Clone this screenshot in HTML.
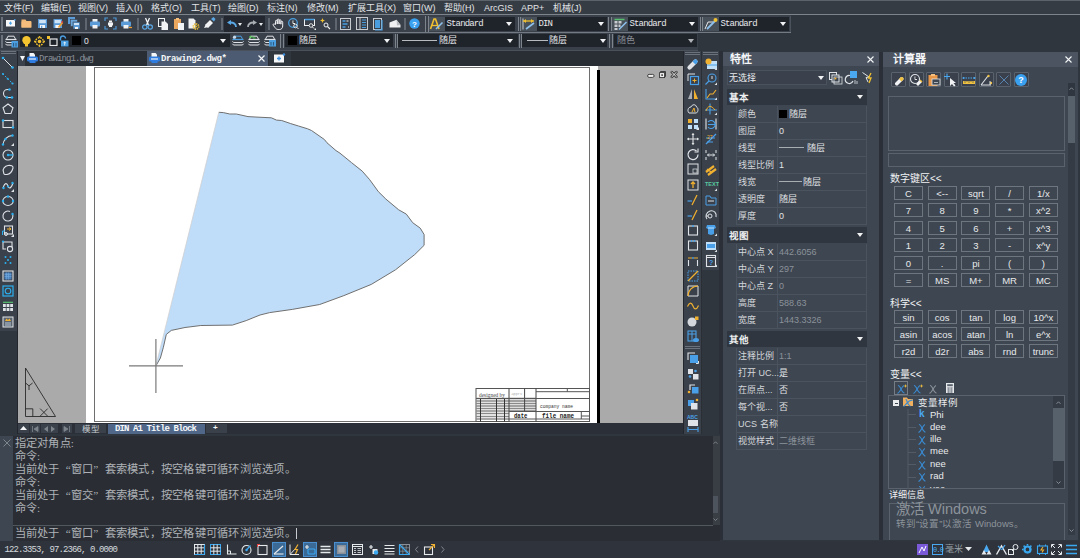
<!DOCTYPE html><html lang="zh-CN"><head><meta charset="utf-8"><style>
*{margin:0;padding:0;box-sizing:border-box}
html,body{width:1080px;height:558px;overflow:hidden;background:#30363e;font-family:"Liberation Sans",sans-serif}
.a{position:absolute}
.t{position:absolute;white-space:nowrap;line-height:1}
.s{font-family:"Liberation Sans",sans-serif}
.m{font-family:"Liberation Mono",monospace}
.r{font-family:"Liberation Serif",serif}
svg{position:absolute;overflow:visible}
</style></head><body>

<div class="a" style="left:0px;top:0px;width:1080px;height:1px;background:#5d636b;"></div>
<div class="a" style="left:0px;top:1px;width:1080px;height:13px;background:#363c44;"></div>
<div class="a" style="left:0px;top:14px;width:1080px;height:1px;background:#7d848c;"></div>
<div class="t s" style="left:4px;top:3.5px;font-size:9px;color:#e2e5e8;">文件(F)</div>
<div class="t s" style="left:41px;top:3.5px;font-size:9px;color:#e2e5e8;">编辑(E)</div>
<div class="t s" style="left:78px;top:3.5px;font-size:9px;color:#e2e5e8;">视图(V)</div>
<div class="t s" style="left:116px;top:3.5px;font-size:9px;color:#e2e5e8;">插入(I)</div>
<div class="t s" style="left:151px;top:3.5px;font-size:9px;color:#e2e5e8;">格式(O)</div>
<div class="t s" style="left:191px;top:3.5px;font-size:9px;color:#e2e5e8;">工具(T)</div>
<div class="t s" style="left:228px;top:3.5px;font-size:9px;color:#e2e5e8;">绘图(D)</div>
<div class="t s" style="left:267px;top:3.5px;font-size:9px;color:#e2e5e8;">标注(N)</div>
<div class="t s" style="left:307px;top:3.5px;font-size:9px;color:#e2e5e8;">修改(M)</div>
<div class="t s" style="left:348px;top:3.5px;font-size:9px;color:#e2e5e8;">扩展工具(X)</div>
<div class="t s" style="left:403px;top:3.5px;font-size:9px;color:#e2e5e8;">窗口(W)</div>
<div class="t s" style="left:444px;top:3.5px;font-size:9px;color:#e2e5e8;">帮助(H)</div>
<div class="t s" style="left:484px;top:3.5px;font-size:9px;color:#e2e5e8;">ArcGIS</div>
<div class="t s" style="left:521px;top:3.5px;font-size:9px;color:#e2e5e8;">APP+</div>
<div class="t s" style="left:553px;top:3.5px;font-size:9px;color:#e2e5e8;">机械(J)</div>
<div class="a" style="left:0px;top:15px;width:1080px;height:36px;background:#30363e;"></div>
<div class="a" style="left:0px;top:15px;width:791px;height:17px;background:#3a4049;"></div>
<div class="a" style="left:0px;top:32px;width:791px;height:1px;background:#737a83;"></div>
<div class="a" style="left:790px;top:16px;width:1px;height:16px;background:#4a525b;"></div>
<div class="a" style="left:0px;top:33px;width:698px;height:17px;background:#3a4049;"></div>
<div class="a" style="left:429px;top:17px;width:16px;height:14px;background:#485059;"></div>
<div class="a" style="left:521px;top:17px;width:16px;height:14px;background:#485059;"></div>
<div class="a" style="left:612px;top:17px;width:16px;height:14px;background:#485059;"></div>
<div class="a" style="left:703px;top:17px;width:16px;height:14px;background:#485059;"></div>
<div class="a" style="left:0px;top:50px;width:698px;height:1px;background:#4a515a;"></div>
<div class="a" style="left:1px;top:17px;width:2px;height:14px;background:#6b727b;"></div>
<div class="a" style="left:1px;top:35px;width:2px;height:13px;background:#6b727b;"></div>
<div class="a" style="left:425px;top:16px;width:1.2px;height:16px;background:#7d848c;"></div>
<div class="a" style="left:427.6px;top:16px;width:1.2px;height:16px;background:#7d848c;"></div>
<div class="a" style="left:517.5px;top:17px;width:1.2px;height:14px;background:#7d848c;"></div>
<div class="a" style="left:520.1px;top:17px;width:1.2px;height:14px;background:#7d848c;"></div>
<div class="a" style="left:608px;top:17px;width:1.2px;height:14px;background:#7d848c;"></div>
<div class="a" style="left:610.6px;top:17px;width:1.2px;height:14px;background:#7d848c;"></div>
<div class="a" style="left:699.5px;top:17px;width:1.2px;height:14px;background:#7d848c;"></div>
<div class="a" style="left:702.1px;top:17px;width:1.2px;height:14px;background:#7d848c;"></div>
<div class="a" style="left:280px;top:34px;width:1.2px;height:14px;background:#7d848c;"></div>
<div class="a" style="left:282.6px;top:34px;width:1.2px;height:14px;background:#7d848c;"></div>
<div class="a" style="left:394.5px;top:34px;width:1.2px;height:14px;background:#7d848c;"></div>
<div class="a" style="left:397.1px;top:34px;width:1.2px;height:14px;background:#7d848c;"></div>
<div class="a" style="left:518.5px;top:34px;width:1.2px;height:14px;background:#7d848c;"></div>
<div class="a" style="left:521.1px;top:34px;width:1.2px;height:14px;background:#7d848c;"></div>
<div class="a" style="left:609px;top:34px;width:1.2px;height:14px;background:#7d848c;"></div>
<div class="a" style="left:611.6px;top:34px;width:1.2px;height:14px;background:#7d848c;"></div>
<div class="a" style="left:85px;top:18px;width:2px;height:12px;background:#5f666f;"></div>
<div class="a" style="left:137px;top:18px;width:2px;height:12px;background:#5f666f;"></div>
<div class="a" style="left:221px;top:18px;width:2px;height:12px;background:#5f666f;"></div>
<div class="a" style="left:268px;top:18px;width:2px;height:12px;background:#5f666f;"></div>
<div class="a" style="left:335px;top:18px;width:2px;height:12px;background:#5f666f;"></div>
<div class="a" style="left:404px;top:18px;width:2px;height:12px;background:#5f666f;"></div>
<svg style="left:6px;top:19px;" width="10" height="8" viewBox="0 0 10 8"><rect x="0" y="1" width="9" height="6.5" fill="#f4f6f8"/><path d="M4.5 2.3L6 4.2 4.5 6 3 4.2Z" fill="#4aa3e8"/><circle cx="8.8" cy="0.8" r="0.9" fill="#4aa3e8"/></svg><svg style="left:21px;top:19px;" width="11" height="9" viewBox="0 0 11 9"><path d="M0.5 0.5h4l1 1.5h4.5v6.5h-9.5z" fill="#f0b878"/><rect x="0.5" y="2.5" width="10" height="6" fill="#f6bd7d"/></svg><svg style="left:38px;top:19px;" width="9" height="9" viewBox="0 0 9 9"><rect x="0" y="0" width="9" height="9" fill="#5b9bd8"/><rect x="1.2" y="1" width="6.6" height="3.2" fill="#cfe3f6"/><rect x="2" y="6" width="5" height="3" fill="#f4f6f8"/><rect x="3" y="6.8" width="1.3" height="2.2" fill="#5b9bd8"/></svg><svg style="left:53px;top:19px;" width="10" height="9" viewBox="0 0 10 9"><rect x="0.5" y="0" width="8.5" height="9" fill="#5b9bd8"/><rect x="1.6" y="1" width="6.2" height="3.2" fill="#cfe3f6"/><rect x="2.4" y="6" width="4.5" height="3" fill="#f4f6f8"/><path d="M5.5 8.5L9.5 3.5" stroke="#f0a030" stroke-width="1.8"/><path d="M8.6 3.6L9.8 2.4" stroke="#e04040" stroke-width="1.5"/></svg><svg style="left:68px;top:17px;" width="12" height="12" viewBox="0 0 12 12"><rect x="0" y="0" width="7" height="7" fill="#5b9bd8"/><rect x="2.5" y="2.5" width="7" height="7" fill="#6aa6dc" stroke="#3a4049" stroke-width="0.6"/><rect x="5" y="5" width="7" height="7" fill="#5b9bd8" stroke="#3a4049" stroke-width="0.6"/><rect x="6" y="6" width="5" height="2" fill="#cfe3f6"/><rect x="7" y="10" width="3" height="2" fill="#f4f6f8"/></svg><svg style="left:90px;top:19px;" width="10" height="10" viewBox="0 0 10 10"><rect x="2.5" y="0" width="5" height="3" fill="#f0f2f4"/><rect x="0" y="2.5" width="10" height="5" rx="1" fill="#5b9bd8"/><rect x="2.5" y="6" width="5" height="3.5" fill="#f0f2f4"/></svg><svg style="left:105px;top:18px;" width="11" height="11" viewBox="0 0 11 11"><path d="M0 3V0H3M8 0H11V3M11 8V11H8M3 11H0V8" stroke="#4a96d8" stroke-width="1.2" fill="none"/><rect x="4" y="2.5" width="3" height="2" fill="#f0f2f4"/><rect x="3" y="4.5" width="5" height="3" fill="#f0f2f4"/><rect x="4" y="7" width="3" height="2" fill="#f0f2f4"/></svg><svg style="left:121px;top:19px;" width="11" height="10" viewBox="0 0 11 10"><rect x="2.5" y="0" width="5" height="3" fill="#f0f2f4"/><rect x="0" y="2.5" width="10" height="5" rx="1" fill="#5b9bd8"/><rect x="2.5" y="6" width="5" height="3.5" fill="#f0f2f4"/><path d="M8 8.5h3" stroke="#f0a030" stroke-width="1.2"/></svg><svg style="left:142px;top:18px;" width="11" height="12" viewBox="0 0 11 12"><path d="M3.5 0L6.5 7M7.5 0L4.5 7" stroke="#f4f6f8" stroke-width="1.3"/><circle cx="2.8" cy="9" r="2.2" fill="none" stroke="#5aa8e6" stroke-width="1.2"/><circle cx="8.2" cy="9" r="2.2" fill="none" stroke="#5aa8e6" stroke-width="1.2"/></svg><svg style="left:158px;top:18px;" width="11" height="12" viewBox="0 0 11 12"><rect x="0.5" y="0.5" width="6" height="8" fill="#3a4049" stroke="#f0f2f4" stroke-width="1"/><path d="M3.5 3.5h4l2.5 2.5v6h-6.5z" fill="#f0f2f4"/></svg><svg style="left:174px;top:18px;" width="11" height="12" viewBox="0 0 11 12"><rect x="0" y="1" width="7" height="10" fill="#e9a65c"/><rect x="2" y="0" width="3" height="2" fill="#f4c27e"/><rect x="4" y="5" width="6" height="7" fill="#f0f2f4"/></svg><svg style="left:188px;top:18px;" width="12" height="12" viewBox="0 0 12 12"><path d="M0.5 0.5h5l2 2v8h-7z" fill="#f0f2f4"/><circle cx="8" cy="8.5" r="2.6" fill="none" stroke="#f0c030" stroke-width="1.8" stroke-dasharray="1.2 0.8"/><circle cx="8" cy="8.5" r="1" fill="#f0c030"/></svg><svg style="left:204px;top:17px;" width="12" height="12" viewBox="0 0 12 12"><path d="M1 8L6 3 9 6 4 11Z" fill="#f0f2f4"/><path d="M7 2L9.5 0 11.5 2 10 4.5Z" fill="#5aa8e6"/><path d="M0 11L2 7 5 10Z" fill="#f0f2f4"/></svg>
<div class="a" style="left:224px;top:16px;width:41px;height:16px;background:#232830;"></div>
<svg style="left:227px;top:20px;" width="10" height="8" viewBox="0 0 10 8"><path d="M9 7C9 3.5 6.5 2.5 3.5 2.5" stroke="#5aa8e6" stroke-width="1.8" fill="none"/><path d="M0 2.5L4 0V5Z" fill="#5aa8e6"/></svg><svg style="left:238px;top:23px;" width="4" height="3" viewBox="0 0 4 3"><path d="M0 0H4L2.0 3Z" fill="#e6e8ea"/></svg><svg style="left:247px;top:20px;" width="10" height="8" viewBox="0 0 10 8"><path d="M1 7C1 3.5 3.5 2.5 6.5 2.5" stroke="#a8adb3" stroke-width="1.8" fill="none"/><path d="M10 2.5L6 0V5Z" fill="#a8adb3"/></svg><svg style="left:259px;top:23px;" width="4" height="3" viewBox="0 0 4 3"><path d="M0 0H4L2.0 3Z" fill="#e6e8ea"/></svg><svg style="left:271.5px;top:18px;" width="12" height="12" viewBox="0 0 12 12"><path d="M3.5 6.5V3.2a0.9 0.9 0 0 1 1.8 0V6V2a0.9 0.9 0 0 1 1.8 0V6V2.6a0.9 0.9 0 0 1 1.8 0V6.2V4.2a0.9 0.9 0 0 1 1.8 0V8c0 2-1.3 3.5-3.3 3.5H6.2C4.8 11.5 3.8 10.8 3 9.6L1.2 7.2a0.9 0.9 0 0 1 1.4-1.1Z" fill="none" stroke="#eef0f2" stroke-width="1"/></svg><svg style="left:288px;top:18px;" width="11" height="12" viewBox="0 0 11 12"><circle cx="5" cy="5" r="4.3" fill="none" stroke="#4a9ee0" stroke-width="1.3"/><path d="M5 2.5V5.5H7" stroke="#eef0f2" stroke-width="1"/><circle cx="7.5" cy="8" r="1.8" fill="none" stroke="#eef0f2" stroke-width="0.9"/><path d="M8.8 9.3L10.5 11" stroke="#eef0f2" stroke-width="1"/></svg><svg style="left:304px;top:18px;" width="12" height="12" viewBox="0 0 12 12"><rect x="0.5" y="1.5" width="10" height="6" fill="none" stroke="#eef0f2" stroke-width="1"/><path d="M0.5 1.5h10" stroke="#4a9ee0" stroke-width="1.5"/><circle cx="7" cy="7.5" r="1.8" fill="#3a4049" stroke="#eef0f2" stroke-width="0.9"/><path d="M8.3 8.8L10 10.5" stroke="#eef0f2" stroke-width="1"/><path d="M12 12H10L12 10Z" fill="#eef0f2"/></svg><svg style="left:320px;top:18px;" width="11" height="12" viewBox="0 0 11 12"><path d="M2.5 0l0.7 1.8 1.8 0.7-1.8 0.7L2.5 5l-0.7-1.8L0 2.5l1.8-0.7z" fill="#f0c030"/><circle cx="6" cy="7" r="2" fill="none" stroke="#eef0f2" stroke-width="1"/><path d="M7.5 8.5L10 11" stroke="#eef0f2" stroke-width="1.1"/></svg><svg style="left:340px;top:18px;" width="11" height="12" viewBox="0 0 11 12"><rect x="0.5" y="0.5" width="10" height="11" fill="none" stroke="#c8ccd0" stroke-width="1"/><path d="M2.5 3h3M2.5 6h5M2.5 9h3" stroke="#4a9ee0" stroke-width="1.3"/><path d="M6.5 3h2M8 9h1" stroke="#eef0f2" stroke-width="1.2"/></svg><svg style="left:356px;top:17px;" width="12" height="13" viewBox="0 0 12 13"><rect x="0.5" y="0.5" width="11" height="12" fill="none" stroke="#c8ccd0" stroke-width="1"/><path d="M4 0.5v12" stroke="#c8ccd0"/><path d="M6 3h4M6 5.5h4M6 8h4M6 10.5h4" stroke="#4a9ee0" stroke-width="1.2"/></svg><svg style="left:373px;top:18px;" width="11" height="12" viewBox="0 0 11 12"><rect x="0.5" y="0.5" width="8" height="11" fill="none" stroke="#c8ccd0" stroke-width="1"/><rect x="2" y="2" width="5" height="8" fill="#4a9ee0"/><path d="M9 2v10H2" stroke="#4a9ee0" stroke-width="1.2" fill="none"/></svg><svg style="left:389px;top:19px;" width="12" height="9" viewBox="0 0 12 9"><path d="M0.5 3.5L7.5 0.8 11.5 6 11.5 8.5H0.5Z" fill="#eef0f2"/><path d="M7.5 0.8L11.5 6 8 6.5Z" fill="#b8bcc0"/></svg><svg style="left:409px;top:18px;" width="11" height="11" viewBox="0 0 11 11"><circle cx="5.5" cy="5.5" r="5.2" fill="#3aa0f0"/><text x="5.5" y="8.6" font-size="8" text-anchor="middle" fill="#fff" font-family="Liberation Sans" font-weight="bold">?</text></svg><svg style="left:430px;top:18px;" width="14" height="12" viewBox="0 0 14 12"><path d="M0.5 11L4 1h1.5L9 11" stroke="#f0c030" stroke-width="1.6" fill="none"/><path d="M2 7.5h5" stroke="#f0c030" stroke-width="1.3"/><path d="M6 11L12.5 4.5" stroke="#8ec0ec" stroke-width="1.6"/></svg>
<div class="a" style="left:445px;top:17px;width:70px;height:14px;background:#1f232a;"></div>
<div class="t m" style="left:446.5px;top:19.5px;font-size:9px;color:#e6e8ea;letter-spacing:-0.85px">Standard</div>
<svg style="left:506px;top:22px;" width="6" height="4" viewBox="0 0 6 4"><path d="M0 0H6L3.0 4Z" fill="#f0f2f4"/></svg>
<div class="a" style="left:537px;top:17px;width:70px;height:14px;background:#1f232a;"></div>
<div class="t m" style="left:538.5px;top:19.5px;font-size:9px;color:#e6e8ea;letter-spacing:-0.85px">DIN</div>
<svg style="left:598px;top:22px;" width="6" height="4" viewBox="0 0 6 4"><path d="M0 0H6L3.0 4Z" fill="#f0f2f4"/></svg>
<div class="a" style="left:628px;top:17px;width:70px;height:14px;background:#1f232a;"></div>
<div class="t m" style="left:629.5px;top:19.5px;font-size:9px;color:#e6e8ea;letter-spacing:-0.85px">Standard</div>
<svg style="left:689px;top:22px;" width="6" height="4" viewBox="0 0 6 4"><path d="M0 0H6L3.0 4Z" fill="#f0f2f4"/></svg>
<div class="a" style="left:719px;top:17px;width:70px;height:14px;background:#1f232a;"></div>
<div class="t m" style="left:720.5px;top:19.5px;font-size:9px;color:#e6e8ea;letter-spacing:-0.85px">Standard</div>
<svg style="left:780px;top:22px;" width="6" height="4" viewBox="0 0 6 4"><path d="M0 0H6L3.0 4Z" fill="#f0f2f4"/></svg>
<svg style="left:522px;top:18px;" width="14" height="12" viewBox="0 0 14 12"><path d="M1 0.5v11" stroke="#c8ccd0"/><path d="M1 3h11" stroke="#f0c030" stroke-width="1.3"/><path d="M1.5 3l2.5-2v4zM11.5 3l-2.5-2v4z" fill="#f0c030"/><path d="M4 11L12 5" stroke="#8ec0ec" stroke-width="1.6"/></svg><svg style="left:614px;top:18px;" width="14" height="12" viewBox="0 0 14 12"><path d="M0.5 1.5h10" stroke="#58c070" stroke-width="1.5"/><rect x="0.5" y="3" width="3" height="2.5" fill="#c8ccd0"/><rect x="4.5" y="3" width="3" height="2.5" fill="#c8ccd0"/><rect x="0.5" y="6.5" width="3" height="2.5" fill="#c8ccd0"/><rect x="4.5" y="6.5" width="2" height="2.5" fill="#c8ccd0"/><rect x="0.5" y="10" width="3" height="2" fill="#c8ccd0"/><path d="M5 11.5L12.5 4" stroke="#8ec0ec" stroke-width="1.6"/></svg><svg style="left:704px;top:18px;" width="14" height="12" viewBox="0 0 14 12"><path d="M1 11L4 4 9.5 4" stroke="#e6e8ea" stroke-width="1" fill="none"/><path d="M3 11L12 2" stroke="#8ec0ec" stroke-width="1.8"/><circle cx="11.5" cy="2" r="2" fill="#f0c030"/></svg>
<div class="a" style="left:20px;top:34px;width:210px;height:13px;background:#1f232a;"></div>
<svg style="left:4.5px;top:35px;" width="14" height="13" viewBox="0 0 14 13"><path d="M1.5 4.2L3 1.2H9L10.5 4.2" stroke="#dfe3e7" stroke-width="1" fill="none"/><path d="M0.5 4.5H11.5" stroke="#dfe3e7" stroke-width="1.2"/><path d="M0.5 6.3L1.5 7.5H8M0.5 8.8L1.5 10H7" stroke="#dfe3e7" stroke-width="1" fill="none"/><rect x="6.5" y="6" width="6.5" height="6.5" fill="#4a9ee0"/><path d="M8.5 8v3.5M11 8v3.5" stroke="#2a4a6a" stroke-width="0.8"/></svg><svg style="left:22px;top:36px;" width="10" height="11" viewBox="0 0 10 11"><circle cx="4.5" cy="4.2" r="4.2" fill="#f4c430"/><rect x="3" y="8" width="3" height="2.5" fill="#f4c430"/></svg><svg style="left:34px;top:36px;" width="11" height="11" viewBox="0 0 11 11"><circle cx="5.5" cy="5.5" r="3.8" fill="none" stroke="#f4c430" stroke-width="1.4" stroke-dasharray="1.6 1"/><circle cx="5.5" cy="5.5" r="1.8" fill="#f4c430"/><circle cx="5.5" cy="0.9" r="0.9" fill="#f4c430"/><circle cx="5.5" cy="10.1" r="0.9" fill="#f4c430"/><circle cx="0.9" cy="5.5" r="0.9" fill="#f4c430"/><circle cx="10.1" cy="5.5" r="0.9" fill="#f4c430"/></svg><svg style="left:47px;top:36px;" width="11" height="11" viewBox="0 0 11 11"><rect x="3" y="3" width="7" height="6.5" fill="none" stroke="#e6e8ea" stroke-width="1.2"/><path d="M0 0h3v3H0z" fill="#f0c030"/></svg><svg style="left:59px;top:35px;" width="10" height="12" viewBox="0 0 10 12"><path d="M1.5 5.5V3.5a2.5 2.5 0 0 1 5 0" stroke="#4a9ee0" stroke-width="1.4" fill="none"/><rect x="2" y="5.5" width="7.5" height="6" fill="#4a9ee0"/><path d="M5.7 10.5V7.2M4.5 8.2l1.2-1.2 1.2 1.2" stroke="#fff" stroke-width="0.8" fill="none"/></svg><div class="a" style="left:72px;top:36px;width:9px;height:9px;background:#000;"></div>
<div class="t s" style="left:84px;top:37px;font-size:8.5px;color:#e6e8ea;">0</div>
<svg style="left:220px;top:39px;" width="6" height="4" viewBox="0 0 6 4"><path d="M0 0H6L3.0 4Z" fill="#f0f2f4"/></svg>
<svg style="left:232px;top:35px;" width="12" height="11" viewBox="0 0 12 11"><path d="M1.5 4.2L3 1.2H9L10.5 4.2" stroke="#4a9ee0" stroke-width="1" fill="none"/><path d="M0.5 4.5H11.5" stroke="#4a9ee0" stroke-width="1.2"/><path d="M0.5 6.3L1.5 7.5H10.5L11.5 6.3M0.5 8.8L1.5 10H10.5L11.5 8.8" stroke="#dfe3e7" stroke-width="1" fill="none"/><circle cx="2.5" cy="2.2" r="1.6" fill="#c8d8e8"/></svg><svg style="left:248px;top:35px;" width="12" height="11" viewBox="0 0 12 11"><path d="M1.5 4.2L3 1.2H9L10.5 4.2" stroke="#dfe3e7" stroke-width="1" fill="none"/><path d="M0.5 4.5H11.5" stroke="#dfe3e7" stroke-width="1.2"/><path d="M0.5 6.3L1.5 7.5H10.5L11.5 6.3M0.5 8.8L1.5 10H10.5L11.5 8.8" stroke="#dfe3e7" stroke-width="1" fill="none"/><path d="M1.5 2h4M1.5 2l1.3-1.2M1.5 2l1.3 1.2M5 3h2.5" stroke="#50d050" stroke-width="1" fill="none"/></svg><svg style="left:263.5px;top:35px;" width="13" height="12" viewBox="0 0 13 12"><path d="M1.5 4.2L3 1.2H9L10.5 4.2" stroke="#dfe3e7" stroke-width="1" fill="none"/><path d="M0.5 4.5H11.5" stroke="#dfe3e7" stroke-width="1.2"/><path d="M0.5 6.3L1.5 7.5H10.5L11.5 6.3M0.5 8.8L1.5 10H10.5L11.5 8.8" stroke="#dfe3e7" stroke-width="1" fill="none"/><rect x="5" y="5" width="7" height="6.5" fill="#4a9ee0"/><path d="M7 7v3.5M9.5 7v3.5" stroke="#2a4a6a" stroke-width="0.8"/></svg>
<div class="a" style="left:285px;top:34px;width:108px;height:13px;background:#1f232a;"></div>
<div class="a" style="left:288px;top:36px;width:9px;height:9px;background:#000;"></div>
<div class="t s" style="left:299px;top:36px;font-size:9px;color:#e6e8ea;">随层</div>
<svg style="left:384px;top:39px;" width="6" height="4" viewBox="0 0 6 4"><path d="M0 0H6L3.0 4Z" fill="#f0f2f4"/></svg>
<div class="a" style="left:398px;top:34px;width:120px;height:13px;background:#1f232a;"></div>
<div class="a" style="left:402px;top:40px;width:35px;height:1.2px;background:#b8bcc0;"></div>
<div class="t s" style="left:439px;top:36px;font-size:9px;color:#e6e8ea;">随层</div>
<svg style="left:507px;top:39px;" width="6" height="4" viewBox="0 0 6 4"><path d="M0 0H6L3.0 4Z" fill="#f0f2f4"/></svg>
<div class="a" style="left:522px;top:34px;width:85px;height:13px;background:#1f232a;"></div>
<div class="a" style="left:527px;top:40px;width:21px;height:1.2px;background:#b8bcc0;"></div>
<div class="t s" style="left:549px;top:36px;font-size:9px;color:#e6e8ea;">随层</div>
<svg style="left:600px;top:39px;" width="6" height="4" viewBox="0 0 6 4"><path d="M0 0H6L3.0 4Z" fill="#f0f2f4"/></svg>
<div class="a" style="left:614px;top:34px;width:83px;height:13px;background:#1f232a;"></div>
<div class="t s" style="left:617px;top:36px;font-size:9px;color:#8a9097;">随色</div>
<svg style="left:688px;top:39px;" width="6" height="4" viewBox="0 0 6 4"><path d="M0 0H6L3.0 4Z" fill="#b0b4b8"/></svg>
<div class="a" style="left:0px;top:51px;width:17px;height:280px;background:#3a414b;"></div>
<div class="a" style="left:17px;top:51px;width:1px;height:383px;background:#23272d;"></div>
<div class="a" style="left:1px;top:51px;width:15px;height:1px;background:#6b727b;"></div>
<div class="a" style="left:1px;top:53px;width:15px;height:1px;background:#6b727b;"></div>
<svg style="left:2px;top:57px;" width="12" height="12" viewBox="0 0 12 12"><path d="M1 1L10.5 10.5" stroke="#dfe3e7" stroke-width="1"/><circle cx="1" cy="1" r="1.3" fill="#2cb0f0"/><circle cx="10.5" cy="10.5" r="1.3" fill="#2cb0f0"/></svg><svg style="left:2px;top:72.5px;" width="12" height="12" viewBox="0 0 12 12"><path d="M0.5 0.5L11 11" stroke="#2cb0f0" stroke-width="1" stroke-dasharray="2 1.5"/><circle cx="1" cy="1" r="1" fill="#2cb0f0"/><circle cx="5.7" cy="5.7" r="1" fill="#2cb0f0"/><circle cx="10.5" cy="10.5" r="1.1" fill="#2cb0f0"/></svg><svg style="left:2px;top:87.5px;" width="12" height="12" viewBox="0 0 12 12"><path d="M7 1.5H5.5A4 4 0 0 0 5.5 9.5H9" stroke="#dfe3e7" stroke-width="1.1" fill="none"/><circle cx="7.5" cy="1.5" r="1.3" fill="#2cb0f0"/><circle cx="5" cy="9.5" r="1.3" fill="#2cb0f0"/><circle cx="10" cy="9.5" r="1.3" fill="#2cb0f0"/></svg><svg style="left:2px;top:103px;" width="12" height="12" viewBox="0 0 12 12"><path d="M6 1L11 4.8 9 10.5H3L1 4.8Z" stroke="#dfe3e7" stroke-width="1.1" fill="none"/></svg><svg style="left:2px;top:118px;" width="12" height="12" viewBox="0 0 12 12"><rect x="1" y="2.5" width="10" height="7" stroke="#dfe3e7" stroke-width="1.1" fill="none"/><circle cx="1" cy="2.5" r="1.2" fill="#2cb0f0"/><circle cx="11" cy="9.5" r="1.2" fill="#2cb0f0"/></svg><svg style="left:2px;top:133.5px;" width="12" height="12" viewBox="0 0 12 12"><path d="M1 11A10 10 0 0 1 10.5 1.5" stroke="#dfe3e7" stroke-width="1.1" fill="none"/><circle cx="1" cy="10.5" r="1.2" fill="#2cb0f0"/><circle cx="3.5" cy="5" r="1.2" fill="#2cb0f0"/><circle cx="10.5" cy="1.5" r="1.2" fill="#2cb0f0"/><path d="M12 12H9L12 9Z" fill="#dfe3e7"/></svg><svg style="left:2px;top:149px;" width="12" height="12" viewBox="0 0 12 12"><circle cx="6" cy="6" r="5" stroke="#dfe3e7" stroke-width="1.1" fill="none"/><path d="M6 6H11" stroke="#2cb0f0" stroke-width="1.3"/><circle cx="6" cy="6" r="1.2" fill="#2cb0f0"/></svg><svg style="left:2px;top:164px;" width="12" height="12" viewBox="0 0 12 12"><path d="M1.5 8C0 5 3 2 6 1.5S11.5 2 11 4 9 10 5 10.5 2 9 1.5 8Z" stroke="#dfe3e7" stroke-width="1.1" fill="none"/></svg><svg style="left:2px;top:179.5px;" width="12" height="12" viewBox="0 0 12 12"><path d="M1 8C3 2 5 3 6 6S9 9 11 3" stroke="#dfe3e7" stroke-width="1.1" fill="none"/><circle cx="1.5" cy="8" r="1.2" fill="#2cb0f0"/><circle cx="6" cy="6.5" r="1.1" fill="#2cb0f0"/><circle cx="10.5" cy="3" r="1.2" fill="#2cb0f0"/><path d="M12 12H9L12 9Z" fill="#dfe3e7"/></svg><svg style="left:2px;top:194.5px;" width="12" height="12" viewBox="0 0 12 12"><ellipse cx="6" cy="6" rx="5.2" ry="4.5" stroke="#dfe3e7" stroke-width="1.1" fill="none"/><circle cx="6" cy="1.5" r="1.2" fill="#2cb0f0"/><circle cx="1" cy="6" r="1.2" fill="#2cb0f0"/><circle cx="11" cy="6" r="1.2" fill="#2cb0f0"/></svg><svg style="left:2px;top:209.5px;" width="12" height="12" viewBox="0 0 12 12"><path d="M10.5 4A5 5 0 1 1 8 1.5" stroke="#dfe3e7" stroke-width="1.1" fill="none"/><circle cx="10.5" cy="4" r="1.2" fill="#2cb0f0"/></svg><svg style="left:2px;top:224.5px;" width="12" height="12" viewBox="0 0 12 12"><rect x="2.5" y="1" width="8" height="8" stroke="#dfe3e7" stroke-width="1.1" fill="none"/><path d="M5 4h4M7 2.5L9 4 7 5.5" stroke="#f0b030" stroke-width="1" fill="none"/><path d="M0.5 10V6H3" stroke="#2cb0f0" stroke-width="1" fill="none"/><circle cx="4" cy="9" r="1.5" fill="none" stroke="#dfe3e7"/><path d="M12 12H9L12 9Z" fill="#dfe3e7"/></svg><svg style="left:2px;top:239.5px;" width="12" height="12" viewBox="0 0 12 12"><path d="M1 2V9h3" stroke="#dfe3e7" stroke-width="1.1" fill="none"/><path d="M1 2H10V7" stroke="#dfe3e7" stroke-width="1.1" fill="none"/><circle cx="1" cy="1.5" r="1.1" fill="#2cb0f0"/><circle cx="8" cy="9" r="2.6" stroke="#dfe3e7" stroke-width="1.1" fill="none"/></svg><svg style="left:2px;top:254px;" width="12" height="12" viewBox="0 0 12 12"><circle cx="3.5" cy="3" r="1" fill="#2cb0f0"/><circle cx="8.5" cy="3" r="1" fill="#2cb0f0"/><circle cx="6" cy="6" r="1" fill="#2cb0f0"/><circle cx="3.5" cy="9" r="1" fill="#2cb0f0"/><circle cx="8.5" cy="9" r="1" fill="#2cb0f0"/></svg><svg style="left:2px;top:269.5px;" width="12" height="12" viewBox="0 0 12 12"><rect x="1" y="1" width="10" height="10" stroke="#dfe3e7" stroke-width="1.1" fill="none"/><rect x="2.5" y="2.5" width="7" height="7" fill="#4a82c0"/><path d="M2.5 4.5h7M2.5 6.5h7M4.5 2.5v7M6.5 2.5v7" stroke="#7ab0e0" stroke-width="0.5"/></svg><svg style="left:2px;top:285px;" width="12" height="12" viewBox="0 0 12 12"><rect x="1" y="1" width="10" height="10" stroke="#2cb0f0" stroke-width="1.2" fill="none"/><circle cx="6" cy="6" r="2.8" stroke="#2cb0f0" stroke-width="1.1" fill="none"/></svg><svg style="left:2px;top:300.5px;" width="12" height="12" viewBox="0 0 12 12"><path d="M1 1.3h10" stroke="#58c070" stroke-width="1.2"/><rect x="1" y="3" width="2.8" height="3" fill="#dfe3e7"/><rect x="4.6" y="3" width="2.8" height="3" fill="#dfe3e7"/><rect x="8.2" y="3" width="2.8" height="3" fill="#dfe3e7"/><rect x="1" y="7" width="2.8" height="3" fill="#dfe3e7"/><rect x="4.6" y="7" width="2.8" height="3" fill="#dfe3e7"/><rect x="8.2" y="7" width="2.8" height="3" fill="#dfe3e7"/></svg><svg style="left:2px;top:315.5px;" width="12" height="12" viewBox="0 0 12 12"><rect x="1" y="1" width="10" height="10" fill="#5a6470" stroke="#dfe3e7" stroke-width="1"/><path d="M3 5L4.5 2.5 6 4 7.5 2.5 9 5Z" fill="#f0b030"/><path d="M3 7h6M3 9h6" stroke="#cfe3f6" stroke-width="0.8"/></svg>
<div class="a" style="left:18px;top:51px;width:665px;height:15px;background:#292d34;"></div>
<div class="a" style="left:18px;top:51px;width:7px;height:15px;background:#3a414b;"></div>
<svg style="left:19.5px;top:56px;" width="5" height="5" viewBox="0 0 5 5"><path d="M0 0H5L2.5 5Z" fill="#f4f6f8"/></svg>
<svg style="left:27px;top:53px;" width="11" height="10" viewBox="0 0 11 10"><path d="M2.5 0h4l1.5 1.5V4H2.5z" fill="#f4f6f8"/><rect x="0" y="3.5" width="11" height="5" rx="1.5" fill="#2f7de0"/><path d="M2 6h7" stroke="#f4f6f8" stroke-width="1.2"/><rect x="2.5" y="8" width="6" height="2" fill="#2f7de0"/></svg>
<div class="t m" style="left:39px;top:55px;font-size:9px;color:#8a9098;letter-spacing:-0.9px">Drawing1.dwg</div>
<div class="a" style="left:147px;top:51px;width:121px;height:15px;background:#4c5b71;"></div>
<svg style="left:149px;top:53px;" width="11" height="10" viewBox="0 0 11 10"><path d="M2.5 0h4l1.5 1.5V4H2.5z" fill="#f4f6f8"/><rect x="0" y="3.5" width="11" height="5" rx="1.5" fill="#2f7de0"/><path d="M2 6h7" stroke="#f4f6f8" stroke-width="1.2"/><rect x="2.5" y="8" width="6" height="2" fill="#2f7de0"/></svg>
<div class="t m" style="left:161px;top:55px;font-size:9px;color:#f4f6f8;font-weight:bold;letter-spacing:-0.35px">Drawing2.dwg*</div>
<svg style="left:258px;top:55px;" width="7" height="7" viewBox="0 0 7 7"><path d="M0.5 0.5L6.5 6.5M6.5 0.5L0.5 6.5" stroke="#f4f6f8" stroke-width="1.2"/></svg>
<div class="a" style="left:269px;top:51px;width:22px;height:15px;background:#30363e;"></div>
<svg style="left:274px;top:53px;" width="12" height="10" viewBox="0 0 12 10"><rect x="0" y="1.5" width="10" height="8" fill="#f4f6f8"/><path d="M5 3.5v4M3 5.5h4" stroke="#3a8ee0" stroke-width="1.3"/><circle cx="10" cy="1.5" r="1.2" fill="#3a8ee0"/></svg>
<div class="a" style="left:18px;top:66px;width:665px;height:357px;background:#aaaaaa;"></div>
<div class="a" style="left:86px;top:66px;width:512px;height:357px;background:#ffffff;"></div>
<div class="a" style="left:597px;top:70px;width:3px;height:353px;background:#000000;"></div>
<div class="a" style="left:94px;top:67px;width:496px;height:355px;border:1px solid #6e6e6e"></div>
<svg style="left:0;top:0" width="1080" height="558" viewBox="0 0 1080 558"><path d="M218.8 112.3 L223.3 112.6 L229.8 114.0 L236.3 114.0 L248.0 116.6 L257.0 117.1 L271.3 117.8 L276.5 120.1 L281.7 120.5 L290.7 123.6 L298.5 126.0 L307.6 128.8 L311.5 130.5 L324.4 139.5 L327.0 142.8 L336.0 150.6 L340.0 153.2 L351.5 162.6 L362.2 171.1 L369.7 179.7 L378.3 191.6 L385.9 199.1 L398.7 209.8 L406.3 214.1 L412.7 222.7 L420.2 228.1 L424.1 234.5 L424.1 245.3 L414.8 254.5 L395.5 269.8 L371.3 284.4 L343.9 295.6 L319.7 304.5 L292.3 309.4 L269.7 312.6 L260.0 315.0 L246.2 320.6 L232.4 325.1 L200.8 325.5 L185.0 327.5 L171.3 330.4 L166.3 334.4 L163.4 347.2 L160.4 358.0 L155.9 365.9 Z" fill="#bfdcf9" stroke="none"/><path d="M218.8 112.3 L223.3 112.6 L229.8 114.0 L236.3 114.0 L248.0 116.6 L257.0 117.1 L271.3 117.8 L276.5 120.1 L281.7 120.5 L290.7 123.6 L298.5 126.0 L307.6 128.8 L311.5 130.5 L324.4 139.5 L327.0 142.8 L336.0 150.6 L340.0 153.2 L351.5 162.6 L362.2 171.1 L369.7 179.7 L378.3 191.6 L385.9 199.1 L398.7 209.8 L406.3 214.1 L412.7 222.7 L420.2 228.1 L424.1 234.5 L424.1 245.3 L414.8 254.5 L395.5 269.8 L371.3 284.4 L343.9 295.6 L319.7 304.5 L292.3 309.4 L269.7 312.6 L260.0 315.0 L246.2 320.6 L232.4 325.1 L200.8 325.5 L185.0 327.5 L171.3 330.4 L166.3 334.4 L163.4 347.2 L160.4 358.0 L155.9 365.9" fill="none" stroke="#707070" stroke-width="1"/><path d="M155.9 365.9L218.8 112.3" stroke="#d0d0d0" stroke-width="0.8"/><path d="M129 365.9H183M155.9 339V393" stroke="#7a7a7a" stroke-width="1.2"/></svg>
<svg style="left:0;top:0" width="1080" height="558" viewBox="0 0 1080 558"><rect x="476" y="388.5" width="113.5" height="33" fill="#fff" stroke="#555" stroke-width="1"/><path d="M476 398.5H509" stroke="#8a8a8a" stroke-width="1.6"/><path d="M476 401H509" stroke="#8a8a8a" stroke-width="1.6"/><path d="M476 403.5H509" stroke="#8a8a8a" stroke-width="1.6"/><path d="M476 406H509" stroke="#8a8a8a" stroke-width="1.6"/><path d="M476 408.5H509" stroke="#8a8a8a" stroke-width="1.6"/><path d="M476 411H509" stroke="#8a8a8a" stroke-width="1.6"/><path d="M476 413.5H509" stroke="#8a8a8a" stroke-width="1.6"/><path d="M476 416.5H509" stroke="#8a8a8a" stroke-width="1.6"/><path d="M476 419H509" stroke="#8a8a8a" stroke-width="1.6"/><path d="M509 398.5H536" stroke="#8a8a8a" stroke-width="1.6"/><path d="M509 401H536" stroke="#8a8a8a" stroke-width="1.6"/><path d="M509 403.5H536" stroke="#8a8a8a" stroke-width="1.6"/><path d="M509 406H536" stroke="#8a8a8a" stroke-width="1.6"/><path d="M509 408.5H536" stroke="#8a8a8a" stroke-width="1.6"/><path d="M509 411H536" stroke="#8a8a8a" stroke-width="1.6"/><path d="M480.5 398V421.5" stroke="#333" stroke-width="1"/><path d="M496.5 398V421.5" stroke="#333" stroke-width="1"/><path d="M504.5 398V421.5" stroke="#333" stroke-width="1"/><path d="M509 388.5V421.5" stroke="#444" stroke-width="1"/><path d="M536 388.5V421.5" stroke="#444" stroke-width="1"/><path d="M524.6 388.5V412" stroke="#444" stroke-width="1"/><path d="M476 398.5H536M536 391.7H589.5M536 398.5H589.5M509 411.5H589.5M509 419H589.5M567.3 388.5V391.7M581.3 411.5V419M581.3 416H589.5" stroke="#555" stroke-width="1"/><text x="479" y="396.5" font-size="6.5" fill="#444" font-family="Liberation Serif" textLength="26" lengthAdjust="spacingAndGlyphs">designed by</text><text x="511.5" y="395" font-size="3.5" fill="#aaa" font-family="Liberation Mono">apprv</text><text x="540" y="407.5" font-size="6" fill="#333" font-family="Liberation Mono" textLength="33" lengthAdjust="spacingAndGlyphs">company name</text><text x="514" y="417.5" font-size="6.5" fill="#222" font-family="Liberation Mono" font-weight="bold" textLength="13.5" lengthAdjust="spacingAndGlyphs">date</text><text x="542" y="417.5" font-size="6.5" fill="#222" font-family="Liberation Mono" font-weight="bold" textLength="32" lengthAdjust="spacingAndGlyphs">file name</text></svg>
<svg style="left:0px;top:0px;" width="1080" height="558" viewBox="0 0 1080 558"><rect x="647.6" y="74.4" width="6.5" height="3" rx="1.5" fill="#f0f0f0" stroke="#333" stroke-width="0.9"/><path d="M660.5 72.5V71.5H665.5V76.5H664.5" stroke="#333" stroke-width="0.9" fill="none"/><rect x="659.6" y="72.6" width="5" height="5" fill="#f0f0f0" stroke="#333" stroke-width="0.9"/><rect x="661.3" y="74.3" width="1.6" height="1.6" fill="#333"/><path d="M671.8 72.2L676.4 76.8M676.4 72.2L671.8 76.8" stroke="#333" stroke-width="2.6" stroke-linecap="round"/><path d="M671.8 72.2L676.4 76.8M676.4 72.2L671.8 76.8" stroke="#f0f0f0" stroke-width="1" stroke-linecap="round"/></svg>
<svg style="left:0px;top:0px;" width="1080" height="558" viewBox="0 0 1080 558"><path d="M25.5 368V416.5H55.5L25.5 368" stroke="#2a2a2a" stroke-width="0.9" fill="none"/><path d="M25.5 408.8H32.8V416.5" stroke="#2a2a2a" stroke-width="0.9" fill="none"/><path d="M40.1 408.6L47.7 416.2M47.7 408.6L40.1 416.2" stroke="#2a2a2a" stroke-width="0.9" fill="none"/><path d="M25.6 383L29 385.8 32.6 383M29 385.8V390" stroke="#2a2a2a" stroke-width="0.9" fill="none"/></svg>
<div class="a" style="left:18px;top:423px;width:665px;height:11px;background:#2b3038;"></div>
<div class="a" style="left:18px;top:424px;width:11px;height:9px;background:#3a414b;"></div>
<svg style="left:20px;top:426px;" width="7" height="4" viewBox="0 0 7 4"><path d="M0 4L3.5 0 7 4Z" fill="#f4f6f8"/></svg>
<div class="a" style="left:30px;top:424px;width:10px;height:9px;background:#3a414b;"></div>
<div class="a" style="left:41px;top:424px;width:10px;height:9px;background:#3a414b;"></div>
<div class="a" style="left:48px;top:424px;width:10px;height:9px;background:#3a414b;"></div>
<div class="a" style="left:62px;top:424px;width:10px;height:9px;background:#3a414b;"></div>
<svg style="left:32px;top:426px;" width="6" height="6" viewBox="0 0 6 6"><path d="M0.5 0V6M6 0.5L2 3 6 5.5Z" fill="#7e848b" stroke="#7e848b" stroke-width="0.8"/></svg>
<svg style="left:43px;top:426px;" width="5" height="6" viewBox="0 0 5 6"><path d="M5 0L1 3 5 6Z" fill="#7e848b"/></svg>
<svg style="left:51px;top:426px;" width="5" height="6" viewBox="0 0 5 6"><path d="M0 0L4 3 0 6Z" fill="#7e848b"/></svg>
<svg style="left:64px;top:426px;" width="6" height="6" viewBox="0 0 6 6"><path d="M5.5 0V6M0 0.5L4 3 0 5.5Z" fill="#7e848b" stroke="#7e848b" stroke-width="0.8"/></svg>
<div class="a" style="left:75px;top:424px;width:31px;height:9px;background:#3a414b;"></div>
<div class="t s" style="left:82px;top:424.5px;font-size:8.5px;color:#c8ccd0;">模型</div>
<div class="a" style="left:108px;top:424px;width:97px;height:10px;background:#50678a;"></div>
<div class="t m" style="left:115px;top:425px;font-size:9px;color:#f4f6f8;font-weight:bold;letter-spacing:-0.9px">DIN A1 Title Block</div>
<div class="a" style="left:206px;top:424px;width:21px;height:9px;background:#3a414b;"></div>
<div class="t s" style="left:213px;top:424px;font-size:8px;color:#f4f6f8;font-weight:bold">+</div>
<div class="a" style="left:683px;top:51px;width:1px;height:383px;background:#23272d;"></div>
<div class="a" style="left:684px;top:51px;width:17px;height:383px;background:#3a414b;"></div>
<div class="a" style="left:702px;top:51px;width:17px;height:219px;background:#3a414b;"></div>
<div class="a" style="left:701px;top:51px;width:1px;height:383px;background:#2a2f36;"></div>
<div class="a" style="left:685px;top:52px;width:15px;height:1px;background:#6b727b;"></div>
<div class="a" style="left:685px;top:54px;width:15px;height:1px;background:#6b727b;"></div>
<div class="a" style="left:703px;top:52px;width:15px;height:1px;background:#6b727b;"></div>
<div class="a" style="left:703px;top:54px;width:15px;height:1px;background:#6b727b;"></div>
<div class="a" style="left:685px;top:346px;width:15px;height:1px;background:#6b727b;"></div>
<div class="a" style="left:685px;top:348px;width:15px;height:1px;background:#6b727b;"></div>
<svg style="left:686.5px;top:57.5px;" width="12" height="12" viewBox="0 0 12 12"><path d="M1 8L7 2a2 2 0 0 1 3 3L4 11a2 2 0 0 1-3-3Z" fill="#dfe3e7"/><path d="M5.5 3.5L7 2a2 2 0 0 1 3 3L8.5 6.5Z" fill="#4aa0e8"/></svg><svg style="left:686.5px;top:72.5px;" width="12" height="12" viewBox="0 0 12 12"><path d="M1 8V1H8" stroke="#dfe3e7" fill="none"/><rect x="3.5" y="3.5" width="8" height="8" stroke="#4aa0e8" stroke-width="1.2" fill="none"/><path d="M7.5 5.5v4M5.5 7.5h4" stroke="#f0b030" stroke-width="1"/></svg><svg style="left:686.5px;top:87.5px;" width="12" height="12" viewBox="0 0 12 12"><path d="M5 1V11H1Z" fill="#a8adb3"/><path d="M7 1V11H11Z" fill="#f0b030"/></svg><svg style="left:686.5px;top:102.5px;" width="12" height="12" viewBox="0 0 12 12"><path d="M2 10C0 8 1 4 4 4 5 1 9 1 9.5 4 12 5 11 10 9 10Z" stroke="#dfe3e7" fill="none"/><path d="M5 9L7 5 8 9" stroke="#f0b030" fill="none"/></svg><svg style="left:686.5px;top:118px;" width="12" height="12" viewBox="0 0 12 12"><rect x="1" y="1" width="4" height="4" fill="#f0b030"/><rect x="7" y="1" width="4" height="4" fill="#bfe0f8"/><rect x="1" y="7" width="4" height="4" fill="#bfe0f8"/><rect x="7" y="7" width="4" height="4" fill="#bfe0f8"/><path d="M12 12H9L12 9Z" fill="#dfe3e7"/></svg><svg style="left:686.5px;top:133px;" width="12" height="12" viewBox="0 0 12 12"><path d="M6 0.5V11.5M0.5 6H11.5" stroke="#dfe3e7" stroke-width="1.1"/><path d="M6 0L4.5 2H7.5ZM6 12L4.5 10H7.5ZM0 6L2 4.5V7.5ZM12 6L10 4.5V7.5Z" fill="#dfe3e7"/></svg><svg style="left:686.5px;top:148px;" width="12" height="12" viewBox="0 0 12 12"><path d="M9.5 3A5 5 0 1 0 11 6.5" stroke="#dfe3e7" stroke-width="1.2" fill="none"/><path d="M11 0.5V4H7.5" stroke="#dfe3e7" stroke-width="1.1" fill="none"/></svg><svg style="left:686.5px;top:163px;" width="12" height="12" viewBox="0 0 12 12"><rect x="1" y="1" width="10" height="10" stroke="#dfe3e7" fill="none"/><rect x="6" y="6" width="4" height="4" stroke="#dfe3e7" stroke-width="0.7" fill="none"/></svg><svg style="left:686.5px;top:178.5px;" width="12" height="12" viewBox="0 0 12 12"><rect x="1" y="1" width="10" height="10" stroke="#dfe3e7" fill="none"/><path d="M6 9V3M4 5L6 3 8 5" stroke="#f0b030" stroke-width="1.3" fill="none"/></svg><svg style="left:686.5px;top:193.5px;" width="12" height="12" viewBox="0 0 12 12"><path d="M0.5 7H5" stroke="#4aa0e8" stroke-width="1.2"/><path d="M5 11L10 1" stroke="#f0b030" stroke-width="1.2"/></svg><svg style="left:686.5px;top:209px;" width="12" height="12" viewBox="0 0 12 12"><path d="M0.5 7H5" stroke="#4aa0e8" stroke-width="1.2"/><path d="M5 11L10 1" stroke="#f0b030" stroke-width="1.2"/></svg><svg style="left:686.5px;top:224px;" width="12" height="12" viewBox="0 0 12 12"><rect x="1.5" y="2" width="9" height="9" stroke="#dfe3e7" stroke-width="1.1" fill="none"/><circle cx="6" cy="2" r="1" fill="#4aa0e8"/></svg><svg style="left:686.5px;top:239px;" width="12" height="12" viewBox="0 0 12 12"><rect x="1.5" y="2" width="9" height="9" stroke="#dfe3e7" stroke-width="1.1" fill="none"/><circle cx="4.5" cy="2" r="0.9" fill="#4aa0e8"/><circle cx="7.5" cy="2" r="0.9" fill="#4aa0e8"/></svg><svg style="left:686.5px;top:254.5px;" width="12" height="12" viewBox="0 0 12 12"><path d="M1.5 5V11M10.5 5V11" stroke="#dfe3e7" stroke-width="1.1"/><path d="M1 3H5M11 3H7" stroke="#f0b030" stroke-width="1.1"/><circle cx="6" cy="3" r="0.9" fill="#4aa0e8"/></svg><svg style="left:686.5px;top:269.5px;" width="12" height="12" viewBox="0 0 12 12"><rect x="1" y="1" width="10" height="10" stroke="#4aa0e8" stroke-width="1" fill="none" stroke-dasharray="1.5 1"/><path d="M1 11L11 1" stroke="#f0b030" stroke-width="1.2"/></svg><svg style="left:686.5px;top:285px;" width="12" height="12" viewBox="0 0 12 12"><path d="M1 11V1H11V11H1" stroke="#dfe3e7" fill="none"/><path d="M1 11A10 10 0 0 1 11 1" stroke="#f0b030" stroke-width="1.2" fill="none"/></svg><svg style="left:686.5px;top:300px;" width="12" height="12" viewBox="0 0 12 12"><path d="M0.5 6.5C2.5 2 4.5 2 6 6S9.5 10 11.5 5.5" stroke="#f0b030" stroke-width="1.2" fill="none"/></svg><svg style="left:686.5px;top:315px;" width="12" height="12" viewBox="0 0 12 12"><circle cx="5" cy="7" r="4.5" fill="#d4d8dc"/><rect x="8" y="1.5" width="3.5" height="3.5" fill="#f0b030"/></svg><svg style="left:686.5px;top:330px;" width="12" height="12" viewBox="0 0 12 12"><rect x="1" y="1" width="8" height="10" stroke="#4aa0e8" stroke-width="1.1" fill="none"/><path d="M1 4H9M5 1V11" stroke="#4aa0e8"/><ellipse cx="9" cy="10" rx="3" ry="2" fill="#4aa0e8"/></svg><svg style="left:686.5px;top:352px;" width="12" height="12" viewBox="0 0 12 12"><path d="M1 8V1H8" stroke="#dfe3e7" stroke-width="1.1" fill="none"/><rect x="3" y="3" width="8" height="8" fill="#4aa0e8"/><path d="M11.5 9V11.5H9" stroke="#dfe3e7" fill="none"/></svg><svg style="left:686.5px;top:368px;" width="12" height="12" viewBox="0 0 12 12"><rect x="1" y="1" width="5" height="5" fill="#dfe3e7"/><rect x="6" y="6" width="5.5" height="5.5" fill="#dfe3e7"/><circle cx="8.5" cy="3" r="1.3" fill="#4aa0e8"/><circle cx="3" cy="8.5" r="1.3" fill="#4aa0e8"/></svg><svg style="left:686.5px;top:383px;" width="12" height="12" viewBox="0 0 12 12"><path d="M3 7V2H8" stroke="#dfe3e7" stroke-width="1.2" fill="none"/><rect x="5" y="4" width="6.5" height="6.5" fill="#4aa0e8"/><circle cx="2" cy="9" r="1.3" fill="#f0b030"/></svg><svg style="left:686.5px;top:398px;" width="12" height="12" viewBox="0 0 12 12"><rect x="1" y="2" width="6" height="6" fill="#4aa0e8"/><rect x="4" y="5" width="6.5" height="6.5" fill="#dfe3e7"/><circle cx="10" cy="2" r="1.3" fill="#f0b030"/></svg><svg style="left:686.5px;top:414px;" width="12" height="12" viewBox="0 0 12 12"><text x="0" y="5" font-size="5" fill="#4aa0e8" font-family="Liberation Sans" font-weight="bold">ABC</text><rect x="1" y="6" width="10" height="6" fill="#dfe3e7"/></svg><svg style="left:686.5px;top:426px;" width="12" height="12" viewBox="0 0 12 12"><path d="M1 1V6M11 1V6M1 3.5H11" stroke="#4aa0e8" stroke-width="1.1"/></svg><svg style="left:704.5px;top:57.5px;" width="12" height="12" viewBox="0 0 12 12"><rect x="2" y="3" width="10" height="8" fill="#bfe0f8"/><path d="M2 7h10" stroke="#4aa0e8"/><circle cx="3.5" cy="3.5" r="3" fill="#f0b030"/><path d="M12 12H9.5L12 9.5Z" fill="#dfe3e7"/></svg><svg style="left:704.5px;top:72.5px;" width="12" height="12" viewBox="0 0 12 12"><circle cx="7" cy="5" r="4" stroke="#4aa0e8" stroke-width="1.1" fill="none"/><path d="M4 8L0.5 11.5" stroke="#4aa0e8" stroke-width="1.1"/><path d="M7 3V6" stroke="#dfe3e7"/><path d="M12 12H9.5L12 9.5Z" fill="#dfe3e7"/></svg><svg style="left:704.5px;top:87.5px;" width="12" height="12" viewBox="0 0 12 12"><path d="M1 1V11H11" stroke="#4aa0e8" stroke-width="1.1" fill="none"/><path d="M2 10L5 6H8L11 2" stroke="#f0b030" stroke-width="1.1" fill="none"/><path d="M12 12H9.5L12 9.5Z" fill="#dfe3e7"/></svg><svg style="left:704.5px;top:102.5px;" width="12" height="12" viewBox="0 0 12 12"><path d="M5 0.5V11.5" stroke="#4aa0e8" stroke-width="1.1"/><path d="M0 7H12" stroke="#4aa0e8" stroke-width="1"/><path d="M1 8C3 2 6 2 10 7" stroke="#f0b030" stroke-width="1" fill="none"/><path d="M12 12H9.5L12 9.5Z" fill="#dfe3e7"/></svg><svg style="left:704.5px;top:118px;" width="12" height="12" viewBox="0 0 12 12"><path d="M1 0.5V11.5M11 0.5V11.5" stroke="#dfe3e7" stroke-width="1.1"/><path d="M3 4A4 4 0 1 1 3 9" stroke="#4aa0e8" stroke-width="1.1" fill="none"/><path d="M3 6.5H11" stroke="#4aa0e8" stroke-width="1.1"/></svg><svg style="left:704.5px;top:133px;" width="12" height="12" viewBox="0 0 12 12"><path d="M1 11L11 1" stroke="#4aa0e8" stroke-width="1.2"/><path d="M1 5H10M2 9H8" stroke="#4aa0e8" stroke-width="1"/><text x="2" y="6" font-size="5" fill="#f0b030" font-family="Liberation Sans">27</text></svg><svg style="left:704.5px;top:148.5px;" width="12" height="12" viewBox="0 0 12 12"><path d="M1 1V4M1 8V11M11 1V4M11 8V11" stroke="#dfe3e7"/><path d="M2.5 6H9.5M2.5 6L4 4.5M2.5 6L4 7.5M9.5 6L8 4.5M9.5 6L8 7.5" stroke="#dfe3e7" fill="none"/></svg><svg style="left:704.5px;top:163.5px;" width="12" height="12" viewBox="0 0 12 12"><path d="M1 8L9 2M3 11L11 5" stroke="#f0b030" stroke-width="2.2"/><path d="M2 5L6 8" stroke="#f0b030" stroke-width="1.2"/></svg><svg style="left:704.5px;top:178.5px;" width="12" height="12" viewBox="0 0 12 12"><text x="0" y="7" font-size="5.5" fill="#58c8a0" font-family="Liberation Sans" font-weight="bold">TEXT</text><path d="M12 12H9.5L12 9.5Z" fill="#dfe3e7"/></svg><svg style="left:704.5px;top:194px;" width="12" height="12" viewBox="0 0 12 12"><path d="M1 4V11H11V4H6L5 2H1Z" stroke="#4aa0e8" fill="none"/><path d="M3 7h6" stroke="#dfe3e7"/></svg><svg style="left:704.5px;top:209px;" width="12" height="12" viewBox="0 0 12 12"><path d="M2 10C0 8 1 3 5 2 9 1 12 4 11 8" stroke="#dfe3e7" stroke-width="1.1" fill="none"/><circle cx="5" cy="7" r="2" stroke="#dfe3e7" fill="none"/><path d="M1 7H3" stroke="#dfe3e7"/></svg><svg style="left:704.5px;top:224px;" width="12" height="12" viewBox="0 0 12 12"><path d="M2 1H10L11 4 9 5V10L6 11 3 10V5L1 4Z" fill="#4aa0e8"/><path d="M3 4H9" stroke="#bfe0f8"/><path d="M12 12H9.5L12 9.5Z" fill="#dfe3e7"/></svg><svg style="left:704.5px;top:239.5px;" width="12" height="12" viewBox="0 0 12 12"><rect x="1" y="2" width="10" height="8" fill="#bfe0f8"/><rect x="2" y="4" width="8" height="4" fill="#4aa0e8"/><path d="M12 12H9.5L12 9.5Z" fill="#dfe3e7"/></svg><svg style="left:704.5px;top:254.5px;" width="12" height="12" viewBox="0 0 12 12"><rect x="1.5" y="0.5" width="9" height="11" stroke="#dfe3e7" stroke-width="1.1" fill="none"/><path d="M1.5 2.5H10.5" stroke="#dfe3e7"/><text x="4" y="10" font-size="7" fill="#4aa0e8" font-family="Liberation Sans" font-weight="bold">?</text><path d="M12 12H9.5L12 9.5Z" fill="#dfe3e7"/></svg>
<div class="a" style="left:719px;top:51px;width:4px;height:489px;background:#2b3038;"></div>
<div class="a" style="left:723px;top:52px;width:156px;height:488px;background:#3e4651;"></div>
<div class="a" style="left:723px;top:52px;width:156px;height:14px;background:#4b5460;"></div>
<div class="t r" style="left:730px;top:54px;font-size:11px;color:#f4f6f8;font-weight:bold">特性</div>
<svg style="left:867px;top:56px;" width="7" height="7" viewBox="0 0 7 7"><path d="M0.5 0.5L6.5 6.5M6.5 0.5L0.5 6.5" stroke="#f4f6f8" stroke-width="1.1"/></svg>
<div class="a" style="left:727px;top:70px;width:100px;height:15px;background:#3a414c;border:1px solid #4a525d"></div>
<div class="t s" style="left:728.5px;top:73.5px;font-size:9px;color:#e8eaec;">无选择</div>
<svg style="left:818px;top:76px;" width="6" height="4" viewBox="0 0 6 4"><path d="M0 0H6L3.0 4Z" fill="#f0f2f4"/></svg>
<svg style="left:829px;top:72px;" width="13" height="12" viewBox="0 0 13 12"><rect x="0.5" y="0.5" width="7" height="7" fill="none" stroke="#dfe3e7"/><rect x="3" y="3" width="7" height="7" fill="#3e4651" stroke="#dfe3e7"/><rect x="5" y="5" width="8" height="7" fill="none" stroke="#dfe3e7" stroke-width="0.8"/><circle cx="6.5" cy="6.5" r="1" fill="#f0b030"/></svg>
<svg style="left:845px;top:71px;" width="13" height="13" viewBox="0 0 13 13"><rect x="5" y="0" width="7" height="7" fill="#4aa8f0"/><path d="M5 4.5A4 4 0 1 0 8 10" stroke="#dfe3e7" stroke-width="1.2" fill="none"/><path d="M10 9V13M12 10V13" stroke="#dfe3e7" stroke-width="0.8"/></svg>
<svg style="left:862px;top:72px;" width="12" height="12" viewBox="0 0 12 12"><path d="M0.5 0.5L7 5 4 5.5 6 10" stroke="#dfe3e7" stroke-width="1" fill="none"/><path d="M9 1L6.5 6H9L7 11" stroke="#f0c030" stroke-width="1.3" fill="none"/></svg>
<div class="a" style="left:727px;top:89px;width:140px;height:16px;background:#30363f;"></div>
<div class="t s" style="left:729px;top:92.5px;font-size:9.5px;color:#eceef0;font-weight:bold">基本</div>
<svg style="left:857px;top:95px;" width="6" height="4" viewBox="0 0 6 4"><path d="M0 0H6L3.0 4Z" fill="#f0f2f4"/></svg>
<div class="a" style="left:736px;top:106px;width:131px;height:17px;border-bottom:1px solid #4b535e;border-left:1px solid #4b535e"></div>
<div class="a" style="left:777px;top:106px;width:1px;height:17px;background:#4b535e;"></div>
<div class="a" style="left:866px;top:106px;width:1px;height:17px;background:#4b535e;"></div>
<div class="t s" style="left:738px;top:110px;font-size:9px;color:#d4d7db;">颜色</div>
<div class="a" style="left:779px;top:110px;width:8px;height:8px;background:#000;"></div>
<div class="t s" style="left:789px;top:110px;font-size:9px;color:#e0e3e6;">随层</div>
<div class="a" style="left:736px;top:123px;width:131px;height:17px;border-bottom:1px solid #4b535e;border-left:1px solid #4b535e"></div>
<div class="a" style="left:777px;top:123px;width:1px;height:17px;background:#4b535e;"></div>
<div class="a" style="left:866px;top:123px;width:1px;height:17px;background:#4b535e;"></div>
<div class="t s" style="left:738px;top:127px;font-size:9px;color:#d4d7db;">图层</div>
<div class="t s" style="left:779px;top:127px;font-size:9px;color:#e0e3e6;">0</div>
<div class="a" style="left:736px;top:140px;width:131px;height:17px;border-bottom:1px solid #4b535e;border-left:1px solid #4b535e"></div>
<div class="a" style="left:777px;top:140px;width:1px;height:17px;background:#4b535e;"></div>
<div class="a" style="left:866px;top:140px;width:1px;height:17px;background:#4b535e;"></div>
<div class="t s" style="left:738px;top:144px;font-size:9px;color:#d4d7db;">线型</div>
<div class="a" style="left:779px;top:147px;width:25px;height:1.4px;background:#a8adb2;"></div>
<div class="t s" style="left:806.5px;top:144px;font-size:9px;color:#e0e3e6;">随层</div>
<div class="a" style="left:736px;top:157px;width:131px;height:17px;border-bottom:1px solid #4b535e;border-left:1px solid #4b535e"></div>
<div class="a" style="left:777px;top:157px;width:1px;height:17px;background:#4b535e;"></div>
<div class="a" style="left:866px;top:157px;width:1px;height:17px;background:#4b535e;"></div>
<div class="t s" style="left:738px;top:161px;font-size:9px;color:#d4d7db;">线型比例</div>
<div class="t s" style="left:779px;top:161px;font-size:9px;color:#e0e3e6;">1</div>
<div class="a" style="left:736px;top:174px;width:131px;height:17px;border-bottom:1px solid #4b535e;border-left:1px solid #4b535e"></div>
<div class="a" style="left:777px;top:174px;width:1px;height:17px;background:#4b535e;"></div>
<div class="a" style="left:866px;top:174px;width:1px;height:17px;background:#4b535e;"></div>
<div class="t s" style="left:738px;top:178px;font-size:9px;color:#d4d7db;">线宽</div>
<div class="a" style="left:779px;top:181px;width:22.5px;height:1.4px;background:#a8adb2;"></div>
<div class="t s" style="left:803px;top:178px;font-size:9px;color:#e0e3e6;">随层</div>
<div class="a" style="left:736px;top:191px;width:131px;height:17px;border-bottom:1px solid #4b535e;border-left:1px solid #4b535e"></div>
<div class="a" style="left:777px;top:191px;width:1px;height:17px;background:#4b535e;"></div>
<div class="a" style="left:866px;top:191px;width:1px;height:17px;background:#4b535e;"></div>
<div class="t s" style="left:738px;top:195px;font-size:9px;color:#d4d7db;">透明度</div>
<div class="t s" style="left:779px;top:195px;font-size:9px;color:#e0e3e6;">随层</div>
<div class="a" style="left:736px;top:208px;width:131px;height:17px;border-bottom:1px solid #4b535e;border-left:1px solid #4b535e"></div>
<div class="a" style="left:777px;top:208px;width:1px;height:17px;background:#4b535e;"></div>
<div class="a" style="left:866px;top:208px;width:1px;height:17px;background:#4b535e;"></div>
<div class="t s" style="left:738px;top:212px;font-size:9px;color:#d4d7db;">厚度</div>
<div class="t s" style="left:779px;top:212px;font-size:9px;color:#e0e3e6;">0</div>
<div class="a" style="left:727px;top:227px;width:140px;height:16px;background:#30363f;"></div>
<div class="t s" style="left:729px;top:230.5px;font-size:9.5px;color:#eceef0;font-weight:bold">视图</div>
<svg style="left:857px;top:233px;" width="6" height="4" viewBox="0 0 6 4"><path d="M0 0H6L3.0 4Z" fill="#f0f2f4"/></svg>
<div class="a" style="left:736px;top:244px;width:131px;height:17px;border-bottom:1px solid #4b535e;border-left:1px solid #4b535e"></div>
<div class="a" style="left:777px;top:244px;width:1px;height:17px;background:#4b535e;"></div>
<div class="a" style="left:866px;top:244px;width:1px;height:17px;background:#4b535e;"></div>
<div class="t s" style="left:738px;top:248px;font-size:9px;color:#d4d7db;">中心点 X</div>
<div class="t s" style="left:779px;top:248px;font-size:9px;color:#8b929a;">442.6056</div>
<div class="a" style="left:736px;top:261px;width:131px;height:17px;border-bottom:1px solid #4b535e;border-left:1px solid #4b535e"></div>
<div class="a" style="left:777px;top:261px;width:1px;height:17px;background:#4b535e;"></div>
<div class="a" style="left:866px;top:261px;width:1px;height:17px;background:#4b535e;"></div>
<div class="t s" style="left:738px;top:265px;font-size:9px;color:#d4d7db;">中心点 Y</div>
<div class="t s" style="left:779px;top:265px;font-size:9px;color:#8b929a;">297</div>
<div class="a" style="left:736px;top:278px;width:131px;height:17px;border-bottom:1px solid #4b535e;border-left:1px solid #4b535e"></div>
<div class="a" style="left:777px;top:278px;width:1px;height:17px;background:#4b535e;"></div>
<div class="a" style="left:866px;top:278px;width:1px;height:17px;background:#4b535e;"></div>
<div class="t s" style="left:738px;top:282px;font-size:9px;color:#d4d7db;">中心点 Z</div>
<div class="t s" style="left:779px;top:282px;font-size:9px;color:#8b929a;">0</div>
<div class="a" style="left:736px;top:295px;width:131px;height:17px;border-bottom:1px solid #4b535e;border-left:1px solid #4b535e"></div>
<div class="a" style="left:777px;top:295px;width:1px;height:17px;background:#4b535e;"></div>
<div class="a" style="left:866px;top:295px;width:1px;height:17px;background:#4b535e;"></div>
<div class="t s" style="left:738px;top:299px;font-size:9px;color:#d4d7db;">高度</div>
<div class="t s" style="left:779px;top:299px;font-size:9px;color:#8b929a;">588.63</div>
<div class="a" style="left:736px;top:312px;width:131px;height:17px;border-bottom:1px solid #4b535e;border-left:1px solid #4b535e"></div>
<div class="a" style="left:777px;top:312px;width:1px;height:17px;background:#4b535e;"></div>
<div class="a" style="left:866px;top:312px;width:1px;height:17px;background:#4b535e;"></div>
<div class="t s" style="left:738px;top:316px;font-size:9px;color:#d4d7db;">宽度</div>
<div class="t s" style="left:779px;top:316px;font-size:9px;color:#8b929a;">1443.3326</div>
<div class="a" style="left:727px;top:331px;width:140px;height:16px;background:#30363f;"></div>
<div class="t s" style="left:729px;top:334.5px;font-size:9.5px;color:#eceef0;font-weight:bold">其他</div>
<svg style="left:857px;top:337px;" width="6" height="4" viewBox="0 0 6 4"><path d="M0 0H6L3.0 4Z" fill="#f0f2f4"/></svg>
<div class="a" style="left:736px;top:348px;width:131px;height:17px;border-bottom:1px solid #4b535e;border-left:1px solid #4b535e"></div>
<div class="a" style="left:777px;top:348px;width:1px;height:17px;background:#4b535e;"></div>
<div class="a" style="left:866px;top:348px;width:1px;height:17px;background:#4b535e;"></div>
<div class="t s" style="left:738px;top:352px;font-size:9px;color:#d4d7db;">注释比例</div>
<div class="t s" style="left:779px;top:352px;font-size:9px;color:#8b929a;">1:1</div>
<div class="a" style="left:736px;top:365px;width:131px;height:17px;border-bottom:1px solid #4b535e;border-left:1px solid #4b535e"></div>
<div class="a" style="left:777px;top:365px;width:1px;height:17px;background:#4b535e;"></div>
<div class="a" style="left:866px;top:365px;width:1px;height:17px;background:#4b535e;"></div>
<div class="t s" style="left:738px;top:369px;font-size:9px;color:#d4d7db;">打开 UC...</div>
<div class="t s" style="left:779px;top:369px;font-size:9px;color:#e0e3e6;">是</div>
<div class="a" style="left:736px;top:382px;width:131px;height:17px;border-bottom:1px solid #4b535e;border-left:1px solid #4b535e"></div>
<div class="a" style="left:777px;top:382px;width:1px;height:17px;background:#4b535e;"></div>
<div class="a" style="left:866px;top:382px;width:1px;height:17px;background:#4b535e;"></div>
<div class="t s" style="left:738px;top:386px;font-size:9px;color:#d4d7db;">在原点...</div>
<div class="t s" style="left:779px;top:386px;font-size:9px;color:#e0e3e6;">否</div>
<div class="a" style="left:736px;top:399px;width:131px;height:17px;border-bottom:1px solid #4b535e;border-left:1px solid #4b535e"></div>
<div class="a" style="left:777px;top:399px;width:1px;height:17px;background:#4b535e;"></div>
<div class="a" style="left:866px;top:399px;width:1px;height:17px;background:#4b535e;"></div>
<div class="t s" style="left:738px;top:403px;font-size:9px;color:#d4d7db;">每个视...</div>
<div class="t s" style="left:779px;top:403px;font-size:9px;color:#e0e3e6;">否</div>
<div class="a" style="left:736px;top:416px;width:131px;height:17px;border-bottom:1px solid #4b535e;border-left:1px solid #4b535e"></div>
<div class="a" style="left:777px;top:416px;width:1px;height:17px;background:#4b535e;"></div>
<div class="a" style="left:866px;top:416px;width:1px;height:17px;background:#4b535e;"></div>
<div class="t s" style="left:738px;top:420px;font-size:9px;color:#d4d7db;">UCS 名称</div>
<div class="a" style="left:736px;top:433px;width:131px;height:17px;border-bottom:1px solid #4b535e;border-left:1px solid #4b535e"></div>
<div class="a" style="left:777px;top:433px;width:1px;height:17px;background:#4b535e;"></div>
<div class="a" style="left:866px;top:433px;width:1px;height:17px;background:#4b535e;"></div>
<div class="t s" style="left:738px;top:437px;font-size:9px;color:#d4d7db;">视觉样式</div>
<div class="t s" style="left:779px;top:437px;font-size:9px;color:#8b929a;">二维线框</div>
<div class="a" style="left:879px;top:52px;width:4px;height:488px;background:#2b3038;"></div>
<div class="a" style="left:883px;top:52px;width:195px;height:488px;background:#3e4651;"></div>
<div class="a" style="left:883px;top:52px;width:195px;height:15px;background:#4b5460;"></div>
<div class="t r" style="left:893px;top:54px;font-size:11px;color:#f4f6f8;font-weight:bold">计算器</div>
<svg style="left:1065px;top:56px;" width="7" height="7" viewBox="0 0 7 7"><path d="M0.5 0.5L6.5 6.5M6.5 0.5L0.5 6.5" stroke="#f4f6f8" stroke-width="1.1"/></svg>
<div class="a" style="left:891.0px;top:72px;width:15px;height:15px;background:#3a414c;border:1px solid #59626d;border-radius:1px"></div>
<svg style="left:891.5px;top:72.5px;" width="14" height="14" viewBox="0 0 14 14"><path d="M3 10L9 4a2 2 0 0 1 2.5 2.5L5.5 12.5a2 2 0 0 1-2.5-2.5Z" fill="#f0f2f4"/><path d="M7 6L9 4a2 2 0 0 1 2.5 2.5L9.5 8.5Z" fill="#f0c040"/></svg>
<div class="a" style="left:908.5px;top:72px;width:15px;height:15px;background:#3a414c;border:1px solid #59626d;border-radius:1px"></div>
<svg style="left:909.0px;top:72.5px;" width="14" height="14" viewBox="0 0 14 14"><circle cx="6" cy="6" r="4.5" fill="none" stroke="#dfe3e7" stroke-width="1.1"/><path d="M6 3.5V6.5H8" stroke="#dfe3e7"/><path d="M7 11L11 7 13 9 9 13Z" fill="#f0f2f4"/><path d="M11 7L13 9" stroke="#f0c040" stroke-width="1.5"/></svg>
<div class="a" style="left:926.0px;top:72px;width:15px;height:15px;background:#3a414c;border:1px solid #59626d;border-radius:1px"></div>
<svg style="left:926.5px;top:72.5px;" width="14" height="14" viewBox="0 0 14 14"><rect x="1.5" y="2" width="9" height="11" fill="#e89848"/><rect x="4" y="1" width="4" height="2" fill="#f4c27e"/><rect x="5" y="6" width="8" height="6" fill="#3e4651" stroke="#dfe3e7" stroke-width="0.8"/><path d="M7 9.5h4" stroke="#dfe3e7" stroke-width="0.7"/></svg>
<div class="a" style="left:943.5px;top:72px;width:15px;height:15px;background:#3a414c;border:1px solid #59626d;border-radius:1px"></div>
<svg style="left:944.0px;top:72.5px;" width="14" height="14" viewBox="0 0 14 14"><path d="M3 0.5V6.5M0 3.5H6" stroke="#4aa8f0" stroke-width="1.1"/><path d="M6 5L6 13 8 11 10 13.5 11.5 12.5 9.5 10H12Z" fill="#f0f2f4"/></svg>
<div class="a" style="left:961.0px;top:72px;width:15px;height:15px;background:#3a414c;border:1px solid #59626d;border-radius:1px"></div>
<svg style="left:961.5px;top:72.5px;" width="14" height="14" viewBox="0 0 14 14"><path d="M1 5H13" stroke="#4aa8f0" stroke-width="1" stroke-dasharray="1.5 1"/><circle cx="1.5" cy="5" r="1" fill="#4aa8f0"/><circle cx="12.5" cy="5" r="1" fill="#4aa8f0"/><rect x="1" y="8" width="12" height="3" fill="#f0c040"/><path d="M3 8v2M5 8v1M7 8v2M9 8v1M11 8v2" stroke="#3e4651" stroke-width="0.6"/></svg>
<div class="a" style="left:978.5px;top:72px;width:15px;height:15px;background:#3a414c;border:1px solid #59626d;border-radius:1px"></div>
<svg style="left:979.0px;top:72.5px;" width="14" height="14" viewBox="0 0 14 14"><path d="M2 12L9 3" stroke="#dfe3e7" stroke-width="1.1"/><path d="M2 12H12" stroke="#dfe3e7" stroke-width="1"/><circle cx="9.5" cy="3" r="1.2" fill="#f0c040"/><circle cx="12" cy="10" r="1.2" fill="#f0c040"/><path d="M11 12V8" stroke="#dfe3e7"/></svg>
<div class="a" style="left:996.0px;top:72px;width:15px;height:15px;background:#3a414c;border:1px solid #59626d;border-radius:1px"></div>
<svg style="left:996.5px;top:72.5px;" width="14" height="14" viewBox="0 0 14 14"><path d="M2.5 2.5L11.5 11.5M11.5 2.5L2.5 11.5" stroke="#5a8ab8" stroke-width="0.9"/></svg>
<div class="a" style="left:1013.5px;top:72px;width:15px;height:15px;background:#3a414c;border:1px solid #59626d;border-radius:1px"></div>
<svg style="left:1014.0px;top:72.5px;" width="14" height="14" viewBox="0 0 14 14"><circle cx="7" cy="7" r="6" fill="#3aa0f0"/><text x="7" y="10.3" font-size="9" text-anchor="middle" fill="#fff" font-family="Liberation Sans" font-weight="bold">?</text></svg>
<div class="a" style="left:1068px;top:83px;width:7px;height:452px;background:#353b44;"></div>
<div class="a" style="left:1068px;top:83px;width:7px;height:13px;background:#30363f;"></div>
<svg style="left:1069px;top:87px;" width="5" height="3" viewBox="0 0 5 3"><path d="M0.5 2.8L2.5 0.8 4.5 2.8" stroke="#9aa0a6" stroke-width="0.8" fill="none"/></svg>
<div class="a" style="left:1068px;top:96px;width:7px;height:47px;background:#57616c;"></div>
<svg style="left:1069px;top:529px;" width="5" height="3" viewBox="0 0 5 3"><path d="M0.5 0.5L2.5 2.5 4.5 0.5" stroke="#9aa0a6" stroke-width="0.8" fill="none"/></svg>
<div class="a" style="left:888px;top:96px;width:177px;height:55px;background:#3e4651;border:1px solid #59626d"></div>
<div class="a" style="left:888px;top:153px;width:177px;height:14px;background:#3e4651;border:1px solid #59626d"></div>
<div class="t s" style="left:890px;top:174px;font-size:10px;color:#f0f2f4;">数字键区&lt;&lt;</div>
<div class="a" style="left:894px;top:186.0px;width:29px;height:14px;background:#3e4651;border:1px solid #6d757f"></div>
<div class="t s" style="left:894px;top:189.0px;font-size:9.5px;color:#e8eaec;width:29px;text-align:center">C</div>
<div class="a" style="left:927.7px;top:186.0px;width:29px;height:14px;background:#3e4651;border:1px solid #6d757f"></div>
<div class="t s" style="left:927.7px;top:189.0px;font-size:9.5px;color:#e8eaec;width:29px;text-align:center">&lt;--</div>
<div class="a" style="left:961.4px;top:186.0px;width:29px;height:14px;background:#3e4651;border:1px solid #6d757f"></div>
<div class="t s" style="left:961.4px;top:189.0px;font-size:9.5px;color:#e8eaec;width:29px;text-align:center">sqrt</div>
<div class="a" style="left:995.1px;top:186.0px;width:29px;height:14px;background:#3e4651;border:1px solid #6d757f"></div>
<div class="t s" style="left:995.1px;top:189.0px;font-size:9.5px;color:#e8eaec;width:29px;text-align:center">/</div>
<div class="a" style="left:1028.8px;top:186.0px;width:29px;height:14px;background:#3e4651;border:1px solid #6d757f"></div>
<div class="t s" style="left:1028.8px;top:189.0px;font-size:9.5px;color:#e8eaec;width:29px;text-align:center">1/x</div>
<div class="a" style="left:894px;top:203.45px;width:29px;height:14px;background:#3e4651;border:1px solid #6d757f"></div>
<div class="t s" style="left:894px;top:206.45px;font-size:9.5px;color:#e8eaec;width:29px;text-align:center">7</div>
<div class="a" style="left:927.7px;top:203.45px;width:29px;height:14px;background:#3e4651;border:1px solid #6d757f"></div>
<div class="t s" style="left:927.7px;top:206.45px;font-size:9.5px;color:#e8eaec;width:29px;text-align:center">8</div>
<div class="a" style="left:961.4px;top:203.45px;width:29px;height:14px;background:#3e4651;border:1px solid #6d757f"></div>
<div class="t s" style="left:961.4px;top:206.45px;font-size:9.5px;color:#e8eaec;width:29px;text-align:center">9</div>
<div class="a" style="left:995.1px;top:203.45px;width:29px;height:14px;background:#3e4651;border:1px solid #6d757f"></div>
<div class="t s" style="left:995.1px;top:206.45px;font-size:9.5px;color:#e8eaec;width:29px;text-align:center">*</div>
<div class="a" style="left:1028.8px;top:203.45px;width:29px;height:14px;background:#3e4651;border:1px solid #6d757f"></div>
<div class="t s" style="left:1028.8px;top:206.45px;font-size:9.5px;color:#e8eaec;width:29px;text-align:center">x^2</div>
<div class="a" style="left:894px;top:220.9px;width:29px;height:14px;background:#3e4651;border:1px solid #6d757f"></div>
<div class="t s" style="left:894px;top:223.9px;font-size:9.5px;color:#e8eaec;width:29px;text-align:center">4</div>
<div class="a" style="left:927.7px;top:220.9px;width:29px;height:14px;background:#3e4651;border:1px solid #6d757f"></div>
<div class="t s" style="left:927.7px;top:223.9px;font-size:9.5px;color:#e8eaec;width:29px;text-align:center">5</div>
<div class="a" style="left:961.4px;top:220.9px;width:29px;height:14px;background:#3e4651;border:1px solid #6d757f"></div>
<div class="t s" style="left:961.4px;top:223.9px;font-size:9.5px;color:#e8eaec;width:29px;text-align:center">6</div>
<div class="a" style="left:995.1px;top:220.9px;width:29px;height:14px;background:#3e4651;border:1px solid #6d757f"></div>
<div class="t s" style="left:995.1px;top:223.9px;font-size:9.5px;color:#e8eaec;width:29px;text-align:center">+</div>
<div class="a" style="left:1028.8px;top:220.9px;width:29px;height:14px;background:#3e4651;border:1px solid #6d757f"></div>
<div class="t s" style="left:1028.8px;top:223.9px;font-size:9.5px;color:#e8eaec;width:29px;text-align:center">x^3</div>
<div class="a" style="left:894px;top:238.35px;width:29px;height:14px;background:#3e4651;border:1px solid #6d757f"></div>
<div class="t s" style="left:894px;top:241.35px;font-size:9.5px;color:#e8eaec;width:29px;text-align:center">1</div>
<div class="a" style="left:927.7px;top:238.35px;width:29px;height:14px;background:#3e4651;border:1px solid #6d757f"></div>
<div class="t s" style="left:927.7px;top:241.35px;font-size:9.5px;color:#e8eaec;width:29px;text-align:center">2</div>
<div class="a" style="left:961.4px;top:238.35px;width:29px;height:14px;background:#3e4651;border:1px solid #6d757f"></div>
<div class="t s" style="left:961.4px;top:241.35px;font-size:9.5px;color:#e8eaec;width:29px;text-align:center">3</div>
<div class="a" style="left:995.1px;top:238.35px;width:29px;height:14px;background:#3e4651;border:1px solid #6d757f"></div>
<div class="t s" style="left:995.1px;top:241.35px;font-size:9.5px;color:#e8eaec;width:29px;text-align:center">-</div>
<div class="a" style="left:1028.8px;top:238.35px;width:29px;height:14px;background:#3e4651;border:1px solid #6d757f"></div>
<div class="t s" style="left:1028.8px;top:241.35px;font-size:9.5px;color:#e8eaec;width:29px;text-align:center">x^y</div>
<div class="a" style="left:894px;top:255.8px;width:29px;height:14px;background:#3e4651;border:1px solid #6d757f"></div>
<div class="t s" style="left:894px;top:258.8px;font-size:9.5px;color:#e8eaec;width:29px;text-align:center">0</div>
<div class="a" style="left:927.7px;top:255.8px;width:29px;height:14px;background:#3e4651;border:1px solid #6d757f"></div>
<div class="t s" style="left:927.7px;top:258.8px;font-size:9.5px;color:#e8eaec;width:29px;text-align:center">.</div>
<div class="a" style="left:961.4px;top:255.8px;width:29px;height:14px;background:#3e4651;border:1px solid #6d757f"></div>
<div class="t s" style="left:961.4px;top:258.8px;font-size:9.5px;color:#e8eaec;width:29px;text-align:center">pi</div>
<div class="a" style="left:995.1px;top:255.8px;width:29px;height:14px;background:#3e4651;border:1px solid #6d757f"></div>
<div class="t s" style="left:995.1px;top:258.8px;font-size:9.5px;color:#e8eaec;width:29px;text-align:center">(</div>
<div class="a" style="left:1028.8px;top:255.8px;width:29px;height:14px;background:#3e4651;border:1px solid #6d757f"></div>
<div class="t s" style="left:1028.8px;top:258.8px;font-size:9.5px;color:#e8eaec;width:29px;text-align:center">)</div>
<div class="a" style="left:894px;top:273.25px;width:29px;height:14px;background:#3e4651;border:1px solid #6d757f"></div>
<div class="t s" style="left:894px;top:276.25px;font-size:9.5px;color:#e8eaec;width:29px;text-align:center">=</div>
<div class="a" style="left:927.7px;top:273.25px;width:29px;height:14px;background:#3e4651;border:1px solid #6d757f"></div>
<div class="t s" style="left:927.7px;top:276.25px;font-size:9.5px;color:#e8eaec;width:29px;text-align:center">MS</div>
<div class="a" style="left:961.4px;top:273.25px;width:29px;height:14px;background:#3e4651;border:1px solid #6d757f"></div>
<div class="t s" style="left:961.4px;top:276.25px;font-size:9.5px;color:#e8eaec;width:29px;text-align:center">M+</div>
<div class="a" style="left:995.1px;top:273.25px;width:29px;height:14px;background:#3e4651;border:1px solid #6d757f"></div>
<div class="t s" style="left:995.1px;top:276.25px;font-size:9.5px;color:#e8eaec;width:29px;text-align:center">MR</div>
<div class="a" style="left:1028.8px;top:273.25px;width:29px;height:14px;background:#3e4651;border:1px solid #6d757f"></div>
<div class="t s" style="left:1028.8px;top:276.25px;font-size:9.5px;color:#e8eaec;width:29px;text-align:center">MC</div>
<div class="t s" style="left:890px;top:299px;font-size:10px;color:#f0f2f4;">科学&lt;&lt;</div>
<div class="a" style="left:894px;top:309.5px;width:29px;height:14px;background:#3e4651;border:1px solid #6d757f"></div>
<div class="t s" style="left:894px;top:312.5px;font-size:9.5px;color:#e8eaec;width:29px;text-align:center">sin</div>
<div class="a" style="left:927.7px;top:309.5px;width:29px;height:14px;background:#3e4651;border:1px solid #6d757f"></div>
<div class="t s" style="left:927.7px;top:312.5px;font-size:9.5px;color:#e8eaec;width:29px;text-align:center">cos</div>
<div class="a" style="left:961.4px;top:309.5px;width:29px;height:14px;background:#3e4651;border:1px solid #6d757f"></div>
<div class="t s" style="left:961.4px;top:312.5px;font-size:9.5px;color:#e8eaec;width:29px;text-align:center">tan</div>
<div class="a" style="left:995.1px;top:309.5px;width:29px;height:14px;background:#3e4651;border:1px solid #6d757f"></div>
<div class="t s" style="left:995.1px;top:312.5px;font-size:9.5px;color:#e8eaec;width:29px;text-align:center">log</div>
<div class="a" style="left:1028.8px;top:309.5px;width:29px;height:14px;background:#3e4651;border:1px solid #6d757f"></div>
<div class="t s" style="left:1028.8px;top:312.5px;font-size:9.5px;color:#e8eaec;width:29px;text-align:center">10^x</div>
<div class="a" style="left:894px;top:326.8px;width:29px;height:14px;background:#3e4651;border:1px solid #6d757f"></div>
<div class="t s" style="left:894px;top:329.8px;font-size:9.5px;color:#e8eaec;width:29px;text-align:center">asin</div>
<div class="a" style="left:927.7px;top:326.8px;width:29px;height:14px;background:#3e4651;border:1px solid #6d757f"></div>
<div class="t s" style="left:927.7px;top:329.8px;font-size:9.5px;color:#e8eaec;width:29px;text-align:center">acos</div>
<div class="a" style="left:961.4px;top:326.8px;width:29px;height:14px;background:#3e4651;border:1px solid #6d757f"></div>
<div class="t s" style="left:961.4px;top:329.8px;font-size:9.5px;color:#e8eaec;width:29px;text-align:center">atan</div>
<div class="a" style="left:995.1px;top:326.8px;width:29px;height:14px;background:#3e4651;border:1px solid #6d757f"></div>
<div class="t s" style="left:995.1px;top:329.8px;font-size:9.5px;color:#e8eaec;width:29px;text-align:center">ln</div>
<div class="a" style="left:1028.8px;top:326.8px;width:29px;height:14px;background:#3e4651;border:1px solid #6d757f"></div>
<div class="t s" style="left:1028.8px;top:329.8px;font-size:9.5px;color:#e8eaec;width:29px;text-align:center">e^x</div>
<div class="a" style="left:894px;top:344.1px;width:29px;height:14px;background:#3e4651;border:1px solid #6d757f"></div>
<div class="t s" style="left:894px;top:347.1px;font-size:9.5px;color:#e8eaec;width:29px;text-align:center">r2d</div>
<div class="a" style="left:927.7px;top:344.1px;width:29px;height:14px;background:#3e4651;border:1px solid #6d757f"></div>
<div class="t s" style="left:927.7px;top:347.1px;font-size:9.5px;color:#e8eaec;width:29px;text-align:center">d2r</div>
<div class="a" style="left:961.4px;top:344.1px;width:29px;height:14px;background:#3e4651;border:1px solid #6d757f"></div>
<div class="t s" style="left:961.4px;top:347.1px;font-size:9.5px;color:#e8eaec;width:29px;text-align:center">abs</div>
<div class="a" style="left:995.1px;top:344.1px;width:29px;height:14px;background:#3e4651;border:1px solid #6d757f"></div>
<div class="t s" style="left:995.1px;top:347.1px;font-size:9.5px;color:#e8eaec;width:29px;text-align:center">rnd</div>
<div class="a" style="left:1028.8px;top:344.1px;width:29px;height:14px;background:#3e4651;border:1px solid #6d757f"></div>
<div class="t s" style="left:1028.8px;top:347.1px;font-size:9.5px;color:#e8eaec;width:29px;text-align:center">trunc</div>
<div class="t s" style="left:890px;top:370px;font-size:10px;color:#f0f2f4;">变量&lt;&lt;</div>
<div class="a" style="left:894px;top:381px;width:14px;height:14px;background:#3e4651;border:1px solid #767d86"></div>
<svg style="left:897px;top:384px;" width="10" height="10" viewBox="0 0 10 10"><path d="M1 1.5C3.5 1 4.5 9 7.5 9" stroke="#3a8ad0" stroke-width="1.1" fill="none"/><path d="M7 1.5C4.5 2.5 3.5 8 0.5 9.5" stroke="#3a8ad0" stroke-width="1.1" fill="none"/><path d="M8.5 0L9 1.5 10.5 2 9 2.5 8.5 4 8 2.5 6.5 2 8 1.5Z" fill="#f0c040"/></svg>
<svg style="left:913px;top:384px;" width="10" height="10" viewBox="0 0 10 10"><path d="M1 1.5C3.5 1 4.5 9 7.5 9" stroke="#3a8ad0" stroke-width="1.1" fill="none"/><path d="M7 1.5C4.5 2.5 3.5 8 0.5 9.5" stroke="#3a8ad0" stroke-width="1.1" fill="none"/><path d="M8.5 0L9 1.5 10.5 2 9 2.5 8.5 4 8 2.5 6.5 2 8 1.5Z" fill="#f0c040"/></svg>
<svg style="left:929px;top:384px;" width="10" height="10" viewBox="0 0 10 10"><path d="M1 1.5C3.5 1 4.5 9 7.5 9" stroke="#8a9097" stroke-width="1.1" fill="none"/><path d="M7 1.5C4.5 2.5 3.5 8 0.5 9.5" stroke="#8a9097" stroke-width="1.1" fill="none"/></svg>
<svg style="left:945.5px;top:383px;" width="8" height="10" viewBox="0 0 8 10"><rect x="0" y="0" width="8" height="10" fill="#e6e9ec"/><rect x="1.2" y="1.2" width="5.6" height="2" fill="#5a636e"/><path d="M1 5h6M1 7h6M1 9h6M2.7 4.5v5.5M5.3 4.5v5.5" stroke="#5a636e" stroke-width="0.6"/></svg>
<div class="a" style="left:888px;top:395px;width:177px;height:94px;background:#3e4651;border:1px solid #59626d"></div>
<div class="a" style="left:1053px;top:396px;width:11px;height:92px;background:#353b44;"></div>
<svg style="left:1056px;top:401px;" width="5" height="3" viewBox="0 0 5 3"><path d="M0.5 2.8L2.5 0.8 4.5 2.8" stroke="#9aa0a6" stroke-width="0.8" fill="none"/></svg>
<div class="a" style="left:1053px;top:408px;width:11px;height:53px;background:#57616c;"></div>
<svg style="left:1056px;top:481px;" width="5" height="3" viewBox="0 0 5 3"><path d="M0.5 0.5L2.5 2.5 4.5 0.5" stroke="#9aa0a6" stroke-width="0.8" fill="none"/></svg>
<div class="a" style="left:893px;top:400px;width:6px;height:6px;background:#e8eaec;"></div>
<div class="a" style="left:894.5px;top:402.5px;width:3px;height:1px;background:#3e4651;"></div>
<svg style="left:903px;top:397px;" width="12" height="12" viewBox="0 0 12 12"><path d="M0 0.5h4l1 1.5h5V9H0z" fill="#f0b060"/><path d="M3 3C3.5 1 4.5 9 7.5 9" stroke="#3a8ad0" stroke-width="1.2" fill="none"/><path d="M10 3C4.5 2.5 3.5 8 0.5 9.5" stroke="#3a8ad0" stroke-width="1.2" fill="none"/></svg>
<div class="t s" style="left:918px;top:398px;font-size:9.5px;color:#e8eaec;">变量样例</div>
<svg style="left:0px;top:0px;" width="1" height="1" viewBox="0 0 1 1"></svg>
<svg style="left:0;top:0" width="1080" height="558"><path d="M908 409V489" stroke="#535b66"/><path d="M908 414.5H916" stroke="#535b66"/><path d="M908 427.5H916" stroke="#535b66"/><path d="M908 439.5H916" stroke="#535b66"/><path d="M908 452.5H916" stroke="#535b66"/><path d="M908 464.5H916" stroke="#535b66"/><path d="M908 477.5H916" stroke="#535b66"/></svg>
<div class="t s" style="left:919px;top:409px;font-size:10px;color:#4aa8f0;font-weight:bold">k</div>
<div class="t s" style="left:930px;top:409.5px;font-size:9.5px;color:#e8eaec;">Phi</div>
<svg style="left:918px;top:422.5px;" width="9" height="10" viewBox="0 0 9 10"><path d="M1 1.5C3.5 1 4.5 9 7.5 9" stroke="#3a8ad0" stroke-width="1.2" fill="none"/><path d="M7 1.5C4.5 2.5 3.5 8 0.5 9.5" stroke="#3a8ad0" stroke-width="1.2" fill="none"/></svg>
<div class="t s" style="left:930px;top:421.5px;font-size:9.5px;color:#e8eaec;">dee</div>
<svg style="left:918px;top:434.9px;" width="9" height="10" viewBox="0 0 9 10"><path d="M1 1.5C3.5 1 4.5 9 7.5 9" stroke="#3a8ad0" stroke-width="1.2" fill="none"/><path d="M7 1.5C4.5 2.5 3.5 8 0.5 9.5" stroke="#3a8ad0" stroke-width="1.2" fill="none"/></svg>
<div class="t s" style="left:930px;top:433.9px;font-size:9.5px;color:#e8eaec;">ille</div>
<svg style="left:918px;top:447.3px;" width="9" height="10" viewBox="0 0 9 10"><path d="M1 1.5C3.5 1 4.5 9 7.5 9" stroke="#3a8ad0" stroke-width="1.2" fill="none"/><path d="M7 1.5C4.5 2.5 3.5 8 0.5 9.5" stroke="#3a8ad0" stroke-width="1.2" fill="none"/></svg>
<div class="t s" style="left:930px;top:446.3px;font-size:9.5px;color:#e8eaec;">mee</div>
<svg style="left:918px;top:459.7px;" width="9" height="10" viewBox="0 0 9 10"><path d="M1 1.5C3.5 1 4.5 9 7.5 9" stroke="#3a8ad0" stroke-width="1.2" fill="none"/><path d="M7 1.5C4.5 2.5 3.5 8 0.5 9.5" stroke="#3a8ad0" stroke-width="1.2" fill="none"/></svg>
<div class="t s" style="left:930px;top:458.7px;font-size:9.5px;color:#e8eaec;">nee</div>
<svg style="left:918px;top:472.1px;" width="9" height="10" viewBox="0 0 9 10"><path d="M1 1.5C3.5 1 4.5 9 7.5 9" stroke="#3a8ad0" stroke-width="1.2" fill="none"/><path d="M7 1.5C4.5 2.5 3.5 8 0.5 9.5" stroke="#3a8ad0" stroke-width="1.2" fill="none"/></svg>
<div class="t s" style="left:930px;top:471.1px;font-size:9.5px;color:#e8eaec;">rad</div>
<div class="a" style="left:889px;top:483.5px;width:170px;height:4.5px;overflow:hidden"><svg style="left:29px;top:1px;" width="9" height="10" viewBox="0 0 9 10"><path d="M1 1.5C3.5 1 4.5 9 7.5 9" stroke="#3a8ad0" stroke-width="1.2" fill="none"/><path d="M7 1.5C4.5 2.5 3.5 8 0.5 9.5" stroke="#3a8ad0" stroke-width="1.2" fill="none"/></svg><div class="t s" style="left:41px;top:0px;font-size:9.5px;color:#e8eaec;">vee</div></div>
<div class="a" style="left:889px;top:489px;width:176px;height:9px;background:#3e4651;"></div>
<div class="t s" style="left:889px;top:491px;font-size:9px;color:#f0f2f4;">详细信息</div>
<div class="a" style="left:889px;top:503px;width:176px;height:37px;background:#3e4651;border:1px solid #59626d;border-bottom:none"></div>
<div class="t s" style="left:896px;top:502px;font-size:14.5px;color:#8c939a;">激活 Windows</div>
<div class="t s" style="left:896px;top:519px;font-size:9.5px;color:#8c939a;">转到“设置”以激活 Windows。</div>
<div class="a" style="left:0px;top:434px;width:720px;height:2px;background:#30363e;"></div>
<div class="a" style="left:0px;top:436px;width:720px;height:105px;background:#2a2e34;"></div>
<div class="a" style="left:0px;top:436px;width:13px;height:105px;background:#3e4651;"></div>
<svg style="left:3px;top:439px;" width="8" height="8" viewBox="0 0 8 8"><path d="M0.5 0.5L7.5 7.5M7.5 0.5L0.5 7.5" stroke="#7d848c" stroke-width="1"/></svg>
<div class="t r" style="left:14.50px;top:437.8px;width:11.25px;font-size:11.25px;color:#aeb2b7;text-align:left">指</div><div class="t r" style="left:25.75px;top:437.8px;width:11.25px;font-size:11.25px;color:#aeb2b7;text-align:left">定</div><div class="t r" style="left:37.00px;top:437.8px;width:11.25px;font-size:11.25px;color:#aeb2b7;text-align:left">对</div><div class="t r" style="left:48.25px;top:437.8px;width:11.25px;font-size:11.25px;color:#aeb2b7;text-align:left">角</div><div class="t r" style="left:59.50px;top:437.8px;width:11.25px;font-size:11.25px;color:#aeb2b7;text-align:left">点</div><div class="t r" style="left:70.75px;top:437.8px;width:5.62px;font-size:11.25px;color:#aeb2b7;text-align:left">:</div>
<div class="t r" style="left:14.50px;top:450.90000000000003px;width:11.25px;font-size:11.25px;color:#aeb2b7;text-align:left">命</div><div class="t r" style="left:25.75px;top:450.90000000000003px;width:11.25px;font-size:11.25px;color:#aeb2b7;text-align:left">令</div><div class="t r" style="left:37.00px;top:450.90000000000003px;width:5.62px;font-size:11.25px;color:#aeb2b7;text-align:left">:</div>
<div class="t r" style="left:14.50px;top:464.0px;width:11.25px;font-size:11.25px;color:#aeb2b7;text-align:left">当</div><div class="t r" style="left:25.75px;top:464.0px;width:11.25px;font-size:11.25px;color:#aeb2b7;text-align:left">前</div><div class="t r" style="left:37.00px;top:464.0px;width:11.25px;font-size:11.25px;color:#aeb2b7;text-align:left">处</div><div class="t r" style="left:48.25px;top:464.0px;width:11.25px;font-size:11.25px;color:#aeb2b7;text-align:left">于</div><div class="t r" style="left:59.50px;top:464.0px;width:11.25px;font-size:11.25px;color:#aeb2b7;text-align:right">“</div><div class="t r" style="left:70.75px;top:464.0px;width:11.25px;font-size:11.25px;color:#aeb2b7;text-align:left">窗</div><div class="t r" style="left:82.00px;top:464.0px;width:11.25px;font-size:11.25px;color:#aeb2b7;text-align:left">口</div><div class="t r" style="left:93.25px;top:464.0px;width:11.25px;font-size:11.25px;color:#aeb2b7;text-align:left">”</div><div class="t r" style="left:104.50px;top:464.0px;width:11.25px;font-size:11.25px;color:#aeb2b7;text-align:left">套</div><div class="t r" style="left:115.75px;top:464.0px;width:11.25px;font-size:11.25px;color:#aeb2b7;text-align:left">索</div><div class="t r" style="left:127.00px;top:464.0px;width:11.25px;font-size:11.25px;color:#aeb2b7;text-align:left">模</div><div class="t r" style="left:138.25px;top:464.0px;width:11.25px;font-size:11.25px;color:#aeb2b7;text-align:left">式</div><div class="t r" style="left:149.50px;top:464.0px;width:11.25px;font-size:11.25px;color:#aeb2b7;text-align:left">，</div><div class="t r" style="left:160.75px;top:464.0px;width:11.25px;font-size:11.25px;color:#aeb2b7;text-align:left">按</div><div class="t r" style="left:172.00px;top:464.0px;width:11.25px;font-size:11.25px;color:#aeb2b7;text-align:left">空</div><div class="t r" style="left:183.25px;top:464.0px;width:11.25px;font-size:11.25px;color:#aeb2b7;text-align:left">格</div><div class="t r" style="left:194.50px;top:464.0px;width:11.25px;font-size:11.25px;color:#aeb2b7;text-align:left">键</div><div class="t r" style="left:205.75px;top:464.0px;width:11.25px;font-size:11.25px;color:#aeb2b7;text-align:left">可</div><div class="t r" style="left:217.00px;top:464.0px;width:11.25px;font-size:11.25px;color:#aeb2b7;text-align:left">循</div><div class="t r" style="left:228.25px;top:464.0px;width:11.25px;font-size:11.25px;color:#aeb2b7;text-align:left">环</div><div class="t r" style="left:239.50px;top:464.0px;width:11.25px;font-size:11.25px;color:#aeb2b7;text-align:left">浏</div><div class="t r" style="left:250.75px;top:464.0px;width:11.25px;font-size:11.25px;color:#aeb2b7;text-align:left">览</div><div class="t r" style="left:262.00px;top:464.0px;width:11.25px;font-size:11.25px;color:#aeb2b7;text-align:left">选</div><div class="t r" style="left:273.25px;top:464.0px;width:11.25px;font-size:11.25px;color:#aeb2b7;text-align:left">项</div><div class="t r" style="left:284.50px;top:464.0px;width:11.25px;font-size:11.25px;color:#aeb2b7;text-align:left">。</div>
<div class="t r" style="left:14.50px;top:477.1px;width:11.25px;font-size:11.25px;color:#aeb2b7;text-align:left">命</div><div class="t r" style="left:25.75px;top:477.1px;width:11.25px;font-size:11.25px;color:#aeb2b7;text-align:left">令</div><div class="t r" style="left:37.00px;top:477.1px;width:5.62px;font-size:11.25px;color:#aeb2b7;text-align:left">:</div>
<div class="t r" style="left:14.50px;top:490.2px;width:11.25px;font-size:11.25px;color:#aeb2b7;text-align:left">当</div><div class="t r" style="left:25.75px;top:490.2px;width:11.25px;font-size:11.25px;color:#aeb2b7;text-align:left">前</div><div class="t r" style="left:37.00px;top:490.2px;width:11.25px;font-size:11.25px;color:#aeb2b7;text-align:left">处</div><div class="t r" style="left:48.25px;top:490.2px;width:11.25px;font-size:11.25px;color:#aeb2b7;text-align:left">于</div><div class="t r" style="left:59.50px;top:490.2px;width:11.25px;font-size:11.25px;color:#aeb2b7;text-align:right">“</div><div class="t r" style="left:70.75px;top:490.2px;width:11.25px;font-size:11.25px;color:#aeb2b7;text-align:left">窗</div><div class="t r" style="left:82.00px;top:490.2px;width:11.25px;font-size:11.25px;color:#aeb2b7;text-align:left">交</div><div class="t r" style="left:93.25px;top:490.2px;width:11.25px;font-size:11.25px;color:#aeb2b7;text-align:left">”</div><div class="t r" style="left:104.50px;top:490.2px;width:11.25px;font-size:11.25px;color:#aeb2b7;text-align:left">套</div><div class="t r" style="left:115.75px;top:490.2px;width:11.25px;font-size:11.25px;color:#aeb2b7;text-align:left">索</div><div class="t r" style="left:127.00px;top:490.2px;width:11.25px;font-size:11.25px;color:#aeb2b7;text-align:left">模</div><div class="t r" style="left:138.25px;top:490.2px;width:11.25px;font-size:11.25px;color:#aeb2b7;text-align:left">式</div><div class="t r" style="left:149.50px;top:490.2px;width:11.25px;font-size:11.25px;color:#aeb2b7;text-align:left">，</div><div class="t r" style="left:160.75px;top:490.2px;width:11.25px;font-size:11.25px;color:#aeb2b7;text-align:left">按</div><div class="t r" style="left:172.00px;top:490.2px;width:11.25px;font-size:11.25px;color:#aeb2b7;text-align:left">空</div><div class="t r" style="left:183.25px;top:490.2px;width:11.25px;font-size:11.25px;color:#aeb2b7;text-align:left">格</div><div class="t r" style="left:194.50px;top:490.2px;width:11.25px;font-size:11.25px;color:#aeb2b7;text-align:left">键</div><div class="t r" style="left:205.75px;top:490.2px;width:11.25px;font-size:11.25px;color:#aeb2b7;text-align:left">可</div><div class="t r" style="left:217.00px;top:490.2px;width:11.25px;font-size:11.25px;color:#aeb2b7;text-align:left">循</div><div class="t r" style="left:228.25px;top:490.2px;width:11.25px;font-size:11.25px;color:#aeb2b7;text-align:left">环</div><div class="t r" style="left:239.50px;top:490.2px;width:11.25px;font-size:11.25px;color:#aeb2b7;text-align:left">浏</div><div class="t r" style="left:250.75px;top:490.2px;width:11.25px;font-size:11.25px;color:#aeb2b7;text-align:left">览</div><div class="t r" style="left:262.00px;top:490.2px;width:11.25px;font-size:11.25px;color:#aeb2b7;text-align:left">选</div><div class="t r" style="left:273.25px;top:490.2px;width:11.25px;font-size:11.25px;color:#aeb2b7;text-align:left">项</div><div class="t r" style="left:284.50px;top:490.2px;width:11.25px;font-size:11.25px;color:#aeb2b7;text-align:left">。</div>
<div class="t r" style="left:14.50px;top:503.3px;width:11.25px;font-size:11.25px;color:#aeb2b7;text-align:left">命</div><div class="t r" style="left:25.75px;top:503.3px;width:11.25px;font-size:11.25px;color:#aeb2b7;text-align:left">令</div><div class="t r" style="left:37.00px;top:503.3px;width:5.62px;font-size:11.25px;color:#aeb2b7;text-align:left">:</div>
<div class="a" style="left:13px;top:525px;width:700px;height:1px;background:#50575f;"></div>
<div class="t r" style="left:14.50px;top:527.8px;width:11.25px;font-size:11.25px;color:#aeb2b7;text-align:left">当</div><div class="t r" style="left:25.75px;top:527.8px;width:11.25px;font-size:11.25px;color:#aeb2b7;text-align:left">前</div><div class="t r" style="left:37.00px;top:527.8px;width:11.25px;font-size:11.25px;color:#aeb2b7;text-align:left">处</div><div class="t r" style="left:48.25px;top:527.8px;width:11.25px;font-size:11.25px;color:#aeb2b7;text-align:left">于</div><div class="t r" style="left:59.50px;top:527.8px;width:11.25px;font-size:11.25px;color:#aeb2b7;text-align:right">“</div><div class="t r" style="left:70.75px;top:527.8px;width:11.25px;font-size:11.25px;color:#aeb2b7;text-align:left">窗</div><div class="t r" style="left:82.00px;top:527.8px;width:11.25px;font-size:11.25px;color:#aeb2b7;text-align:left">口</div><div class="t r" style="left:93.25px;top:527.8px;width:11.25px;font-size:11.25px;color:#aeb2b7;text-align:left">”</div><div class="t r" style="left:104.50px;top:527.8px;width:11.25px;font-size:11.25px;color:#aeb2b7;text-align:left">套</div><div class="t r" style="left:115.75px;top:527.8px;width:11.25px;font-size:11.25px;color:#aeb2b7;text-align:left">索</div><div class="t r" style="left:127.00px;top:527.8px;width:11.25px;font-size:11.25px;color:#aeb2b7;text-align:left">模</div><div class="t r" style="left:138.25px;top:527.8px;width:11.25px;font-size:11.25px;color:#aeb2b7;text-align:left">式</div><div class="t r" style="left:149.50px;top:527.8px;width:11.25px;font-size:11.25px;color:#aeb2b7;text-align:left">，</div><div class="t r" style="left:160.75px;top:527.8px;width:11.25px;font-size:11.25px;color:#aeb2b7;text-align:left">按</div><div class="t r" style="left:172.00px;top:527.8px;width:11.25px;font-size:11.25px;color:#aeb2b7;text-align:left">空</div><div class="t r" style="left:183.25px;top:527.8px;width:11.25px;font-size:11.25px;color:#aeb2b7;text-align:left">格</div><div class="t r" style="left:194.50px;top:527.8px;width:11.25px;font-size:11.25px;color:#aeb2b7;text-align:left">键</div><div class="t r" style="left:205.75px;top:527.8px;width:11.25px;font-size:11.25px;color:#aeb2b7;text-align:left">可</div><div class="t r" style="left:217.00px;top:527.8px;width:11.25px;font-size:11.25px;color:#aeb2b7;text-align:left">循</div><div class="t r" style="left:228.25px;top:527.8px;width:11.25px;font-size:11.25px;color:#aeb2b7;text-align:left">环</div><div class="t r" style="left:239.50px;top:527.8px;width:11.25px;font-size:11.25px;color:#aeb2b7;text-align:left">浏</div><div class="t r" style="left:250.75px;top:527.8px;width:11.25px;font-size:11.25px;color:#aeb2b7;text-align:left">览</div><div class="t r" style="left:262.00px;top:527.8px;width:11.25px;font-size:11.25px;color:#aeb2b7;text-align:left">选</div><div class="t r" style="left:273.25px;top:527.8px;width:11.25px;font-size:11.25px;color:#aeb2b7;text-align:left">项</div><div class="t r" style="left:284.50px;top:527.8px;width:11.25px;font-size:11.25px;color:#aeb2b7;text-align:left">。</div>
<div class="a" style="left:296px;top:528px;width:1px;height:11px;background:#c8ccd0;"></div>
<div class="a" style="left:713px;top:436px;width:6.5px;height:89px;background:#393e45;"></div>
<svg style="left:713px;top:441px;" width="5" height="3" viewBox="0 0 5 3"><path d="M0.5 2.8L2.5 0.8 4.5 2.8" stroke="#8a9097" stroke-width="0.8" fill="none"/></svg>
<div class="a" style="left:713px;top:496px;width:5px;height:17px;background:#4d545d;"></div>
<svg style="left:713px;top:518px;" width="5" height="3" viewBox="0 0 5 3"><path d="M0.5 0.5L2.5 2.5 4.5 0.5" stroke="#8a9097" stroke-width="0.8" fill="none"/></svg>
<div class="a" style="left:0px;top:541px;width:1080px;height:17px;background:#2f343c;"></div>
<div class="t m" style="left:4.5px;top:545.5px;font-size:9px;color:#d4d8dc;letter-spacing:-0.9px">122.3353,&nbsp;97.2366,&nbsp;0.0000</div>
<svg style="left:194px;top:544px;" width="11" height="11" viewBox="0 0 11 11"><rect x="0.5" y="0.5" width="10" height="10" fill="none" stroke="#e6e9ec"/><path d="M3.8 0.5V10.5M7.2 0.5V10.5M0.5 3.8H10.5M0.5 7.2H10.5" stroke="#e6e9ec" stroke-width="1"/><path d="M0.5 10.5H10.5M10.5 0.5V10.5" stroke="#3aa8f0" stroke-width="1.2"/></svg><svg style="left:210px;top:544px;" width="11" height="11" viewBox="0 0 11 11"><rect x="0.5" y="0.5" width="10" height="10" fill="none" stroke="#3aa8f0"/><path d="M3.8 0.5V10.5M7.2 0.5V10.5M0.5 3.8H10.5M0.5 7.2H10.5" stroke="#e6e9ec" stroke-width="1"/></svg><svg style="left:226px;top:544px;" width="11" height="11" viewBox="0 0 11 11"><path d="M1.5 0.5V10H10.5" stroke="#e6e9ec" stroke-width="1.1" fill="none"/><path d="M1.5 7H4.5V10" stroke="#e6e9ec" fill="none"/></svg><svg style="left:241px;top:544px;" width="11" height="11" viewBox="0 0 11 11"><circle cx="5.5" cy="6" r="4.5" fill="none" stroke="#e6e9ec" stroke-width="1.1"/><path d="M5.5 6L9.5 1.5" stroke="#3aa8f0" stroke-width="1.3"/><circle cx="5.5" cy="6" r="1.2" fill="#3aa8f0"/></svg><svg style="left:257px;top:544px;" width="11" height="11" viewBox="0 0 11 11"><rect x="1" y="1.5" width="9" height="9" fill="none" stroke="#e6e9ec" stroke-width="1.1"/><path d="M0 0H3V1H1V3H0Z" fill="#e04040"/></svg><div class="a" style="left:271.5px;top:542px;width:14px;height:15px;background:#3c6a96;border:1px solid #4a90d0"></div><svg style="left:273px;top:544px;" width="11" height="11" viewBox="0 0 11 11"><path d="M1 10L10 2" stroke="#e6e9ec" stroke-width="1.1"/><path d="M1 10H10.5" stroke="#e6e9ec" stroke-width="1.1"/></svg><svg style="left:289px;top:544px;" width="11" height="11" viewBox="0 0 11 11"><path d="M1 0.5V10.5H10" stroke="#e6e9ec" fill="none"/><path d="M1.5 10L7 4" stroke="#e6e9ec"/><path d="M9 0.5L6 5.5H8.5L6.5 10" stroke="#f0b030" stroke-width="1.2" fill="none"/></svg><div class="a" style="left:302.5px;top:542px;width:14px;height:15px;background:#3c6a96;border:1px solid #4a90d0"></div><svg style="left:304px;top:544px;" width="11" height="11" viewBox="0 0 11 11"><path d="M1 3H5M3 1V5" stroke="#e6e9ec" stroke-width="1.2"/><rect x="4" y="5" width="7" height="5" rx="1" fill="none" stroke="#3aa8f0" stroke-width="1.1"/></svg><svg style="left:320px;top:544px;" width="11" height="11" viewBox="0 0 11 11"><path d="M0.5 2.5H10.5M0.5 5.5H10.5M0.5 8.5H10.5" stroke="#e6e9ec" stroke-width="1.6"/></svg><div class="a" style="left:334.0px;top:542px;width:14px;height:15px;background:#3c6a96;border:1px solid #4a90d0"></div><svg style="left:335.5px;top:544px;" width="11" height="11" viewBox="0 0 11 11"><rect x="1" y="1" width="9" height="9" fill="#8a9097"/><rect x="2.5" y="2.5" width="6" height="6" fill="#a8adb3"/></svg><svg style="left:351.5px;top:544px;" width="11" height="11" viewBox="0 0 11 11"><rect x="0.5" y="0.5" width="10" height="10" fill="none" stroke="#e6e9ec"/><path d="M0.5 2.5H10.5" stroke="#e6e9ec"/><path d="M2 4.5h2M2 6.5h2M2 8.5h2M5.5 4.5h3.5M5.5 6.5h3.5M5.5 8.5h3.5" stroke="#e6e9ec" stroke-width="0.8"/></svg><svg style="left:368px;top:544px;" width="11" height="11" viewBox="0 0 11 11"><path d="M1 3H5M3 1V5" stroke="#e6e9ec" stroke-width="1.2"/><rect x="4.5" y="5" width="5" height="5" fill="#e6e9ec"/><circle cx="8" cy="8.5" r="2.2" fill="#3aa8f0"/></svg><svg style="left:384px;top:544px;" width="11" height="11" viewBox="0 0 11 11"><path d="M0.5 1.5H10.5M0.5 4.5H10.5M0.5 7.5H10.5M0.5 10H10.5" stroke="#e6e9ec" stroke-width="1.1"/></svg><svg style="left:399px;top:544px;" width="11" height="11" viewBox="0 0 11 11"><rect x="0.5" y="0.5" width="10" height="10" fill="none" stroke="#8a9097"/><path d="M0.5 3.8H10.5M0.5 7.2H10.5M3.8 0.5V10.5M7.2 0.5V10.5" stroke="#8a9097" stroke-width="0.7"/><path d="M0.5 0.5L10.5 10.5M0.5 0.5V10.5H10.5" stroke="#3aa8f0" stroke-width="1.2" fill="none"/></svg><svg style="left:414px;top:544px;" width="11" height="11" viewBox="0 0 11 11"><path d="M4 2.5L1.5 5.5 4 8.5" stroke="#8a9097" stroke-width="0.9" fill="none"/></svg><svg style="left:424px;top:544px;" width="11" height="11" viewBox="0 0 11 11"><rect x="0.5" y="3" width="8" height="7.5" fill="none" stroke="#e6e9ec" stroke-width="1.1"/><path d="M5 6L10.5 0.5M7 0.5H10.5V4" stroke="#f0b030" stroke-width="1.1" fill="none"/></svg><svg style="left:440px;top:544px;" width="11" height="11" viewBox="0 0 11 11"><path d="M1.5 2.5L4 5.5 1.5 8.5" stroke="#8a9097" stroke-width="0.9" fill="none"/></svg><svg style="left:917px;top:544px;" width="11" height="11" viewBox="0 0 11 11"><rect x="0" y="0" width="11" height="11" fill="#7a5ad8"/><path d="M2 9L5 3 7 7 9 2" stroke="#fff" stroke-width="1" fill="none"/></svg><div class="a" style="left:932px;top:544px;width:11px;height:11px;border:1px solid #4aa8f0"></div><div class="t m" style="left:933px;top:546.5px;font-size:7px;color:#4aa8f0;letter-spacing:-0.8px">0.0</div><div class="t s" style="left:945px;top:545px;font-size:9px;color:#9aa0a6;">毫米</div><svg style="left:965px;top:547px;" width="7" height="4" viewBox="0 0 7 4"><path d="M0 0H7L3.5 4Z" fill="#e6e9ec"/></svg><svg style="left:981px;top:544px;" width="11" height="11" viewBox="0 0 11 11"><path d="M5.5 0.5L9 8H2Z" fill="#4aa8f0"/><path d="M0.5 10.5L3 6 5.5 10.5ZM5.5 10.5L8 6 10.5 10.5Z" fill="#e6e9ec"/></svg><svg style="left:996px;top:544px;" width="11" height="11" viewBox="0 0 11 11"><path d="M0.5 10.5L5.5 2 10.5 10.5" stroke="#e6e9ec" stroke-width="1.4" fill="none"/><path d="M5.5 6L9 1" stroke="#4aa8f0" stroke-width="1.3"/><path d="M2 2L5 5" stroke="#4aa8f0" stroke-width="1.1"/></svg><svg style="left:1008px;top:544px;" width="11" height="11" viewBox="0 0 11 11"><circle cx="7.5" cy="3" r="2.5" fill="none" stroke="#e6e9ec"/><rect x="0.5" y="5.5" width="5" height="5" fill="none" stroke="#e6e9ec"/><path d="M4 7L6 5" stroke="#e6e9ec"/></svg><svg style="left:1022px;top:544px;" width="11" height="11" viewBox="0 0 11 11"><circle cx="5.5" cy="5.5" r="3" fill="none" stroke="#3aa8f0" stroke-width="2.2"/><path d="M5.5 0V11M0 5.5H11M1.6 1.6L9.4 9.4M9.4 1.6L1.6 9.4" stroke="#3aa8f0" stroke-width="1.6" stroke-dasharray="1.6 6"/></svg><svg style="left:1037px;top:544px;" width="11" height="11" viewBox="0 0 11 11"><rect x="0.5" y="2" width="10" height="7.5" fill="none" stroke="#3aa8f0" stroke-width="1.1"/><path d="M6 3L4 6H6.5L5 8.5" stroke="#f0b030" stroke-width="1.1" fill="none"/><path d="M2.5 0.5V2M8.5 0.5V2M2.5 9.5V11M8.5 9.5V11" stroke="#3aa8f0"/></svg><svg style="left:1051px;top:544px;" width="11" height="11" viewBox="0 0 11 11"><path d="M0.5 3.5V0.5H3.5M7.5 0.5H10.5V3.5M10.5 7.5V10.5H7.5M3.5 10.5H0.5V7.5M1 1L4 4M10 1L7 4M10 10L7 7M1 10L4 7" stroke="#e6e9ec" stroke-width="1" fill="none"/></svg><svg style="left:1066px;top:544px;" width="11" height="11" viewBox="0 0 11 11"><path d="M0 1.5H11M0 5.5H11M0 9.5H11" stroke="#3aa8f0" stroke-width="1.6"/></svg>
</body></html>
